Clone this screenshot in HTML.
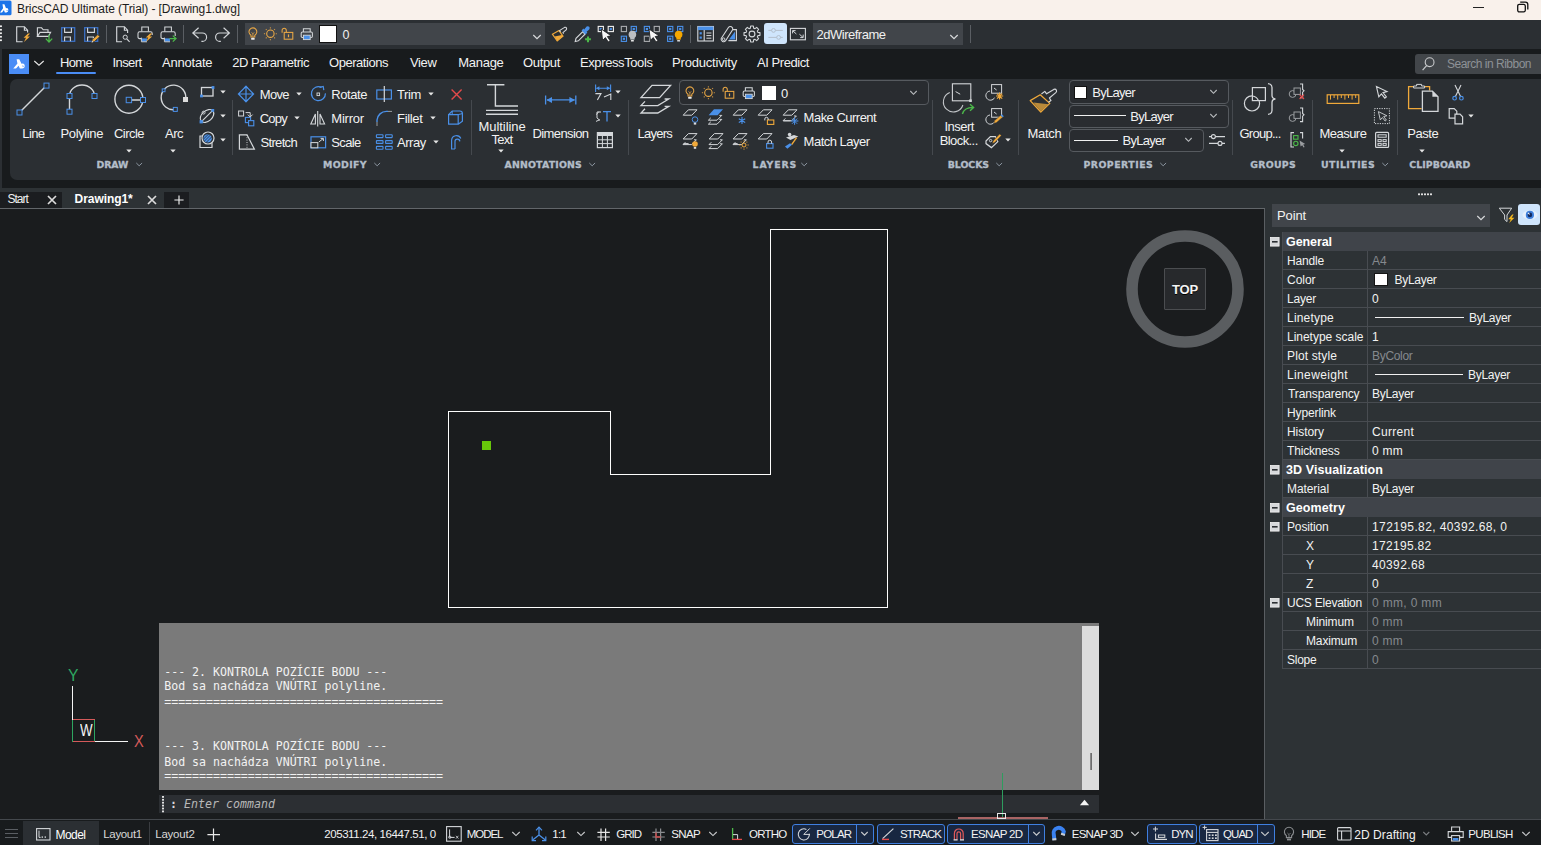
<!DOCTYPE html>
<html lang="en"><head><meta charset="utf-8"><title>BricsCAD Ultimate (Trial) - [Drawing1.dwg]</title>
<style>
html,body{margin:0;padding:0;background:#181b1d;}
body{width:1541px;height:845px;position:relative;overflow:hidden;font-family:"Liberation Sans",sans-serif;}
#app{position:absolute;left:0;top:0;width:1541px;height:845px;overflow:hidden;}
#app>div,#app>svg,#app>span{position:absolute;}
#app>svg{overflow:visible;}
.t{white-space:pre;}
</style></head><body><div id="app">
<div style="left:0px;top:0px;width:1541px;height:20px;background:#f9f1eb;"></div>
<svg style="left:0px;top:0px;" width="13" height="16" viewBox="0 0 13 16"><rect x="-2" y="0.5" width="13.5" height="14.8" rx="1.6" fill="#1c74e9"/><g transform="translate(0.3 -0.6) scale(0.84 1.12)"><path d="M2.6 4.4 h2.3 l1.9 3.5 q2.6 -0.6 2.8 1.6 q0 2.1 -2.3 2.1 h-1.9 l-1.1 -2.1 l-2.2 2.1 h-2.4 l3.6 -3.8 z M7.4 9.4 l0.6 1.1 q0.7 0 0.7 -0.6 q0 -0.6 -1.3 -0.5 z" fill="#fff" fill-rule="evenodd"/></g></svg>
<span class="t" style="left:17px;top:1px;line-height:17px;font-size:12px;color:#1c1c1c;letter-spacing:-0.094px;">BricsCAD Ultimate (Trial) - [Drawing1.dwg]</span>
<div style="left:1473px;top:7px;width:11px;height:1px;background:#222;"></div>
<svg style="left:1517px;top:1px;" width="12" height="12" viewBox="0 0 12 12"><rect x="0.7" y="3.3" width="7.6" height="7.6" rx="1.6" fill="none" stroke="#111" stroke-width="1.3"/><path d="M3.2 1.2 h5.2 a2.4 2.4 0 0 1 2.4 2.4 v5" fill="none" stroke="#111" stroke-width="1.3"/></svg>
<div style="left:0px;top:20px;width:1541px;height:29px;background:#2b2f33;"></div>
<svg style="left:0px;top:25px;" width="3" height="19" viewBox="0 0 3 19"><rect x="0" y="0.4" width="1.9" height="1.7" fill="#f0f0f0"/><rect x="0" y="3.9" width="1.9" height="1.7" fill="#f0f0f0"/><rect x="0" y="7.4" width="1.9" height="1.7" fill="#f0f0f0"/><rect x="0" y="10.9" width="1.9" height="1.7" fill="#f0f0f0"/><rect x="0" y="14.4" width="1.9" height="1.7" fill="#f0f0f0"/></svg>
<svg style="left:16px;top:26px;" width="16" height="18" viewBox="0 0 16 18"><path d="M11.6 6.4 V4.2 L8.4 0.7 H0.7 V15.7 H6.6 M8.4 0.7 V4.2 H11.6" fill="none" stroke="#d4d7da" stroke-width="1.15"/><path d="M12.0 7.6 l-4.4 4.2 h2.4 l-2 4.2 l6 -5.4 h-2.6 l2.6 -3 z" fill="#f0a93a"/></svg>
<svg style="left:36px;top:26px;" width="18" height="18" viewBox="0 0 18 18"><path d="M1.4 10.4 V1.8 H5.6 L7.2 3.8 H12 V6.4 M1.4 10.4 L4 6.4 H14.6 L12.4 10.4 Z" fill="none" stroke="#d4d7da" stroke-width="1.1"/><path d="M13 8.6 V15.6 M9.8 12.6 L13 16 L16.2 12.6" fill="none" stroke="#4cb84a" stroke-width="1.3"/></svg>
<svg style="left:61px;top:27px;" width="15" height="15" viewBox="0 0 15 15"><rect x="0.7" y="0.7" width="13" height="13.6" fill="none" stroke="#3b70c4" stroke-width="1.3"/><path d="M3.6 0.8 V5.4 H10.4 V0.8 M3.6 14.2 V10 H9.4 V14.2" fill="none" stroke="#d4d7da" stroke-width="1.1"/></svg>
<svg style="left:84px;top:27px;" width="16" height="16" viewBox="0 0 16 16"><rect x="0.7" y="0.7" width="13" height="13.6" fill="none" stroke="#3b70c4" stroke-width="1.3"/><path d="M3.6 0.8 V5.4 H10.4 V0.8 M3.6 14.2 V10 H9.4 V14.2" fill="none" stroke="#d4d7da" stroke-width="1.1"/><path d="M7.6 15.4 l0.8 -2.8 l5.4 -5 l2 2 l-5.4 5 z" fill="#f0a93a" stroke="#2b2f33" stroke-width="0.7"/><path d="M7.6 15.4 l0.5 -1.8 l1.3 1.3 z" fill="#ddd"/></svg>
<div style="left:106px;top:25px;width:1px;height:18px;background:#5a5e63;"></div>
<svg style="left:116px;top:26px;" width="15" height="18" viewBox="0 0 15 18"><path d="M11.6 7 V4.2 L8.4 0.7 H0.7 V15.7 H6 M8.4 0.7 V4.2 H11.6" fill="none" stroke="#d4d7da" stroke-width="1.15"/><circle cx="9.2" cy="11.2" r="2.1" fill="none" stroke="#d4d7da" stroke-width="1"/><path d="M10.8 12.8 l2.8 3" stroke="#d4d7da" stroke-width="1.1"/></svg>
<svg style="left:137px;top:26px;" width="18" height="18" viewBox="0 0 18 18"><path d="M4.8 5.6 V1 H11.4 V5.6" fill="none" stroke="#d4d7da" stroke-width="1.05"/><path d="M4.6 12.6 H2.6 Q1 12.6 1 11 V7.4 Q1 5.8 2.6 5.8 H13.6 Q15.2 5.8 15.2 7.4 V9" fill="none" stroke="#d4d7da" stroke-width="1.05"/><rect x="4.6" y="12.4" width="5.4" height="3.2" fill="#4a90e8"/><path d="M4.4 11.6 V15.8 H10" fill="none" stroke="#d4d7da" stroke-width="0.9"/><path d="M13.2 7.4 l-4.4 4.2 h2.4 l-2 4.2 l6 -5.4 h-2.6 l2.6 -3 z" fill="#f0a93a"/></svg>
<svg style="left:160px;top:26px;" width="18" height="18" viewBox="0 0 18 18"><path d="M4.8 5.6 V1 H11.4 V5.6" fill="none" stroke="#d4d7da" stroke-width="1.05"/><path d="M4.6 12.6 H2.6 Q1 12.6 1 11 V7.4 Q1 5.8 2.6 5.8 H13.6 Q15.2 5.8 15.2 7.4 V9" fill="none" stroke="#d4d7da" stroke-width="1.05"/><rect x="4.6" y="12.4" width="5.4" height="3.2" fill="#4a90e8"/><path d="M4.4 11.6 V15.8 H10" fill="none" stroke="#d4d7da" stroke-width="0.9"/><path d="M15.2 9 V10" stroke="#d4d7da" stroke-width="1.05"/><path d="M9.4 12.6 h6.4 M12.8 9.6 l3.2 3 l-3.2 3" fill="none" stroke="#4cb84a" stroke-width="1.3"/></svg>
<div style="left:183px;top:25px;width:1px;height:18px;background:#5a5e63;"></div>
<svg style="left:191.5px;top:26.5px;" width="17" height="16" viewBox="0 0 17 16"><path d="M6.6 0.8 L0.8 6 L6.6 11.2 M0.8 6 H10.4 A4.2 4.2 0 0 1 10.4 14.4 H9.4" fill="none" stroke="#d4d7da" stroke-width="1.15"/></svg>
<svg style="left:214px;top:26.5px;" width="17" height="16" viewBox="0 0 17 16"><path d="M9.6 0.8 L15.4 6 L9.6 11.2 M15.4 6 H5.8 A4.2 4.2 0 0 0 5.8 14.4 H6.8" fill="none" stroke="#d4d7da" stroke-width="1.15"/></svg>
<div style="left:237px;top:25px;width:1px;height:18px;background:#5a5e63;"></div>
<div style="left:245px;top:23px;width:300px;height:22px;background:#41454a;"></div>
<svg style="left:248px;top:27px;" width="11" height="14" viewBox="0 0 11 14"><path d="M3 8.2 A3.9 3.9 0 1 1 6.8 8.2 V10 H3 Z" fill="none" stroke="#eaa845" stroke-width="1.05"/><path d="M3.6 5.4 L4.9 6.8 L6.2 5.4 M4.9 6.8 V9.6" fill="none" stroke="#eaa845" stroke-width="0.8"/><rect x="3.1" y="10.8" width="3.6" height="2" rx="0.9" fill="#ececec"/></svg>
<svg style="left:263.2px;top:27px;" width="15" height="15" viewBox="0 0 15 15"><g transform="translate(7.4 6.7)"><circle r="3.7" fill="none" stroke="#eaa845" stroke-width="1.1"/><path d="M0 -5.3 V-6.5" stroke="#eaa845" stroke-width="1.1" stroke-opacity="0.8" transform="rotate(0)"/><path d="M0 -5.3 V-6.5" stroke="#eaa845" stroke-width="1.1" stroke-opacity="0.8" transform="rotate(45)"/><path d="M0 -5.3 V-6.5" stroke="#eaa845" stroke-width="1.1" stroke-opacity="0.8" transform="rotate(90)"/><path d="M0 -5.3 V-6.5" stroke="#eaa845" stroke-width="1.1" stroke-opacity="0.8" transform="rotate(135)"/><path d="M0 -5.3 V-6.5" stroke="#eaa845" stroke-width="1.1" stroke-opacity="0.8" transform="rotate(180)"/><path d="M0 -5.3 V-6.5" stroke="#eaa845" stroke-width="1.1" stroke-opacity="0.8" transform="rotate(225)"/><path d="M0 -5.3 V-6.5" stroke="#eaa845" stroke-width="1.1" stroke-opacity="0.8" transform="rotate(270)"/><path d="M0 -5.3 V-6.5" stroke="#eaa845" stroke-width="1.1" stroke-opacity="0.8" transform="rotate(315)"/></g></svg>
<svg style="left:281.2px;top:27px;" width="13" height="14" viewBox="0 0 13 14"><rect x="3.2" y="5.4" width="8.6" height="6.8" fill="none" stroke="#eaa845" stroke-width="1.05"/><path d="M1.1 5.8 V3.4 A2.1 2.1 0 0 1 5.3 3.4 V5.2" fill="none" stroke="#eaa845" stroke-width="1.05"/><rect x="6.9" y="7.4" width="1.2" height="2.8" fill="#eaa845"/></svg>
<svg style="left:300.2px;top:27px;" width="14" height="14" viewBox="0 0 14 14"><path d="M3.4 5 V1.8 H10.2 V5 M3.2 10.4 H2.4 Q1.2 10.4 1.2 9.2 V6.2 Q1.2 5 2.4 5 H11.2 Q12.4 5 12.4 6.2 V9.2 Q12.4 10.4 11.2 10.4 H10.4" fill="none" stroke="#d4d7da" stroke-width="1.05"/><rect x="3.4" y="8.2" width="6.8" height="4.4" fill="#4a90e8" stroke="#d4d7da" stroke-width="0.9"/></svg>
<div style="left:319px;top:25px;width:18px;height:18px;background:#fff;border:1px solid #111;box-sizing:border-box;"></div>
<span class="t" style="left:342.5px;top:26px;line-height:18px;font-size:12.5px;color:#f0f0f0;letter-spacing:0.047px;">0</span>
<svg style="left:533px;top:33.5px;" width="8" height="6" viewBox="0 0 8 6"><path d="M0.3 1 L4.0 4.6 L7.7 1" fill="none" stroke="#d8dadc" stroke-width="1.2"/></svg>
<svg style="left:551px;top:26px;" width="18" height="17" viewBox="0 0 18 17"><path d="M1.4 8.2 L8 4.6 L12 10.2 L6.2 15 Z" fill="none" stroke="#f0a93a" stroke-width="1.15"/><path d="M3.6 10.6 L11 9 L12 10.2 L6.2 15 Z" fill="#f0a93a"/><path d="M9.4 6 L8.6 4.6 L10.4 3.4 L13.6 1.4 Q15.2 1 15.6 2.4 Q15.8 3.4 14.8 4.2 L12 6.6 L12.6 7.6" fill="none" stroke="#d4d7da" stroke-width="1.1"/></svg>
<svg style="left:574px;top:25px;" width="18" height="18" viewBox="0 0 18 18"><path d="M1.2 16.6 L2 13.4 L8.6 6.8 L11 9.2 L4.4 15.8 Z" fill="none" stroke="#d4d7da" stroke-width="1.1"/><path d="M7.6 5.4 L9.4 3.6 L10.2 4.4 L12.6 1.6 Q14 0.6 15.2 1.8 Q16.2 3 15.2 4.4 L12.6 6.8 L13.4 7.6 L11.6 9.4 Z" fill="#4a90e8"/><path d="M14 11.4 V17.2 M11.1 14.3 H16.9" stroke="#4cb84a" stroke-width="2"/></svg>
<svg style="left:597px;top:25px;" width="18" height="18" viewBox="0 0 18 18"><rect x="1.2" y="1.4" width="5.2" height="5.2" fill="none" stroke="#f0f0f0" stroke-width="1.1"/><rect x="2.7" y="2.9" width="2.2" height="2.2" fill="#4a90e8"/><rect x="11.2" y="1.4" width="5.2" height="5.2" fill="none" stroke="#f0f0f0" stroke-width="1.1"/><rect x="12.7" y="2.9" width="2.2" height="2.2" fill="#4a90e8"/><path d="M4.2 4 l1.4 11.4 l2.8 -2.8 l2.8 4.4 l2 -1.2 l-2.8 -4.2 l3.8 -0.8 z" fill="#f6f6f6" stroke="#1e2023" stroke-width="0.9" stroke-linejoin="round"/></svg>
<svg style="left:620px;top:25px;" width="18" height="18" viewBox="0 0 18 18"><rect x="1.3" y="1.4" width="5.2" height="5.2" fill="none" stroke="#a9acaf" stroke-width="1.1"/><rect x="11.2" y="1.4" width="5.2" height="5.2" fill="none" stroke="#4a90e8" stroke-width="1.1"/><rect x="12.7" y="2.9" width="2.2" height="2.2" fill="#4a90e8"/><rect x="1.3" y="11.2" width="5.2" height="5.2" fill="none" stroke="#4a90e8" stroke-width="1.1"/><rect x="2.8" y="12.7" width="2.2" height="2.2" fill="#4a90e8"/><circle cx="12.4" cy="9.6" r="3.8" fill="#bdbfc1"/><path d="M10.2 12.0 h4.4 v2.6 h-4.4 z" fill="#bdbfc1"/><rect x="10.9" y="15.0" width="3" height="1.6" rx="0.6" fill="#e8e8e8"/></svg>
<svg style="left:643px;top:25px;" width="18" height="18" viewBox="0 0 18 18"><rect x="1.3" y="1.4" width="5.2" height="5.2" fill="none" stroke="#4a90e8" stroke-width="1.1"/><rect x="2.8" y="2.9" width="2.2" height="2.2" fill="#4a90e8"/><rect x="11.2" y="1.4" width="5.2" height="5.2" fill="none" stroke="#a9acaf" stroke-width="1.1"/><rect x="1.3" y="11.2" width="5.2" height="5.2" fill="none" stroke="#a9acaf" stroke-width="1.1"/><path d="M6 4 l1.4 11.4 l2.8 -2.8 l2.8 4.4 l2 -1.2 l-2.8 -4.2 l3.8 -0.8 z" fill="#f6f6f6" stroke="#1e2023" stroke-width="0.9" stroke-linejoin="round"/></svg>
<svg style="left:666px;top:25px;" width="18" height="18" viewBox="0 0 18 18"><rect x="1.6" y="1.4" width="5.2" height="5.2" fill="none" stroke="#4a90e8" stroke-width="1.1"/><rect x="3.1" y="2.9" width="2.2" height="2.2" fill="#4a90e8"/><rect x="11.6" y="1.4" width="5.2" height="5.2" fill="none" stroke="#4a90e8" stroke-width="1.1"/><rect x="13.1" y="2.9" width="2.2" height="2.2" fill="#4a90e8"/><rect x="1.6" y="11.2" width="5.2" height="5.2" fill="none" stroke="#4a90e8" stroke-width="1.1"/><rect x="3.1" y="12.7" width="2.2" height="2.2" fill="#4a90e8"/><circle cx="12.6" cy="9.6" r="3.8" fill="#f5a700"/><path d="M10.399999999999999 12.0 h4.4 v2.6 h-4.4 z" fill="#f5a700"/><rect x="11.1" y="15.0" width="3" height="1.6" rx="0.6" fill="#d8d8d8"/></svg>
<div style="left:690px;top:25px;width:1px;height:18px;background:#5a5e63;"></div>
<svg style="left:697px;top:25px;" width="18" height="18" viewBox="0 0 18 18"><rect x="0.8" y="1.5" width="15.6" height="14.5" fill="none" stroke="#d4d7da" stroke-width="1.1"/><rect x="0.8" y="1.5" width="15.6" height="3.6" fill="#4a90e8"/><path d="M7.2 5 v11" stroke="#d4d7da" stroke-width="1.1"/><rect x="2.6" y="7.2" width="2.2" height="2.2" fill="#4a90e8"/><rect x="2.6" y="11.5" width="2.2" height="2.2" fill="#4a90e8"/><path d="M9.4 8 h5 M9.4 10.6 h5 M9.4 13.2 h5" stroke="#d4d7da" stroke-width="1"/></svg>
<svg style="left:720px;top:25px;" width="18" height="18" viewBox="0 0 18 18"><path d="M1.2 13.5 l7.2 -11 a2.4 2.4 0 0 1 4.2 2.2 l-7 11 a2.5 2.5 0 0 1 -4.4 -2.2 z" fill="none" stroke="#d4d7da" stroke-width="1.1"/><circle cx="3.6" cy="14.2" r="1.3" fill="none" stroke="#d4d7da" stroke-width="1"/><path d="M8.4 15.6 h8 v-11 h-3.5" fill="none" stroke="#d4d7da" stroke-width="1.1"/><path d="M9 14.4 l6 -8 v8 z" fill="#4a90e8"/></svg>
<svg style="left:743px;top:25px;" width="18" height="18" viewBox="0 0 18 18"><g transform="translate(9 9)"><path d="M-1.63 -5.88 L-1.37 -7.98 L1.37 -7.98 L1.63 -5.88 L3.01 -5.31 L4.68 -6.61 L6.61 -4.68 L5.31 -3.01 L5.88 -1.63 L7.98 -1.37 L7.98 1.37 L5.88 1.63 L5.31 3.01 L6.61 4.68 L4.68 6.61 L3.01 5.31 L1.63 5.88 L1.37 7.98 L-1.37 7.98 L-1.63 5.88 L-3.01 5.31 L-4.68 6.61 L-6.61 4.68 L-5.31 3.01 L-5.88 1.63 L-7.98 1.37 L-7.98 -1.37 L-5.88 -1.63 L-5.31 -3.01 L-6.61 -4.68 L-4.68 -6.61 L-3.01 -5.31 Z" fill="none" stroke="#d4d7da" stroke-width="1.1" stroke-linejoin="round"/><circle r="2.9" fill="none" stroke="#d4d7da" stroke-width="1.1"/></g></svg>
<div style="left:764px;top:23px;width:23px;height:21px;background:#cfe5fc;border-radius:3px;"></div>
<svg style="left:766px;top:25px;" width="19" height="18" viewBox="0 0 19 18"><path d="M2.4 5.4 h14.4 M2.4 12.4 h14.4" stroke="#b4bfcc" stroke-width="1"/><circle cx="7.5" cy="5.4" r="1.9" fill="#cfe5fc" stroke="#b4bfcc" stroke-width="1"/><circle cx="12.6" cy="12.4" r="1.9" fill="#cfe5fc" stroke="#b4bfcc" stroke-width="1"/></svg>
<svg style="left:789px;top:26px;" width="18" height="16" viewBox="0 0 18 16"><rect x="1.4" y="2.4" width="15" height="11.4" fill="none" stroke="#d4d7da" stroke-width="1.1"/><path d="M3.6 7.4 V4.6 H6.6 M3.8 4.8 L7.4 8 M14.2 8.6 V11.6 H11.2 M14 11.4 L10.4 8.2" fill="none" stroke="#d4d7da" stroke-width="1"/></svg>
<div style="left:813px;top:23px;width:150px;height:22px;background:#41454a;"></div>
<span class="t" style="left:816.5px;top:26px;line-height:18px;font-size:13px;color:#f0f0f0;letter-spacing:-0.493px;">2dWireframe</span>
<svg style="left:950px;top:33.5px;" width="8" height="6" viewBox="0 0 8 6"><path d="M0.3 1 L4.0 4.6 L7.7 1" fill="none" stroke="#d8dadc" stroke-width="1.2"/></svg>
<div style="left:970px;top:25px;width:1px;height:18px;background:#5a5e63;"></div>
<div style="left:0px;top:49px;width:1541px;height:138px;background:#181b1d;"></div>
<div style="left:0px;top:49px;width:2px;height:139px;background:#2b2f33;"></div>
<div style="left:9px;top:54px;width:20px;height:20px;background:#4a8df6;"></div>
<svg style="left:9px;top:54px;" width="20" height="20" viewBox="0 0 20 20"><g transform="translate(4.6 -0.45) scale(1.16 1.28)"><path d="M2.6 4.4 h2.3 l1.9 3.5 q2.6 -0.6 2.8 1.6 q0 2.1 -2.3 2.1 h-1.9 l-1.1 -2.1 l-2.2 2.1 h-2.4 l3.6 -3.8 z M7.4 9.4 l0.6 1.1 q0.7 0 0.7 -0.6 q0 -0.6 -1.3 -0.5 z" fill="#fff" fill-rule="evenodd"/></g></svg>
<svg style="left:34px;top:60.4px;" width="10" height="6.6" viewBox="0 0 10 6.6"><path d="M0.3 1 L5.0 5.199999999999999 L9.7 1" fill="none" stroke="#e8e8e8" stroke-width="1.1"/></svg>
<span class="t" style="left:60px;top:54px;line-height:18px;font-size:13px;color:#f2f2f2;letter-spacing:-0.672px;">Home</span>
<span class="t" style="left:112.4px;top:54px;line-height:18px;font-size:13px;color:#f2f2f2;letter-spacing:-0.536px;">Insert</span>
<span class="t" style="left:162px;top:54px;line-height:18px;font-size:13px;color:#f2f2f2;letter-spacing:-0.218px;">Annotate</span>
<span class="t" style="left:232.2px;top:54px;line-height:18px;font-size:13px;color:#f2f2f2;letter-spacing:-0.483px;">2D Parametric</span>
<span class="t" style="left:329px;top:54px;line-height:18px;font-size:13px;color:#f2f2f2;letter-spacing:-0.459px;">Operations</span>
<span class="t" style="left:410px;top:54px;line-height:18px;font-size:13px;color:#f2f2f2;letter-spacing:-0.388px;">View</span>
<span class="t" style="left:458.3px;top:54px;line-height:18px;font-size:13px;color:#f2f2f2;letter-spacing:-0.297px;">Manage</span>
<span class="t" style="left:523px;top:54px;line-height:18px;font-size:13px;color:#f2f2f2;letter-spacing:-0.339px;">Output</span>
<span class="t" style="left:580px;top:54px;line-height:18px;font-size:13px;color:#f2f2f2;letter-spacing:-0.401px;">ExpressTools</span>
<span class="t" style="left:672px;top:54px;line-height:18px;font-size:13px;color:#f2f2f2;letter-spacing:-0.184px;">Productivity</span>
<span class="t" style="left:757px;top:54px;line-height:18px;font-size:13px;color:#f2f2f2;letter-spacing:-0.436px;">AI Predict</span>
<div style="left:56px;top:72px;width:40px;height:2px;background:#4a8df6;border-radius:1px;"></div>
<div style="left:1415px;top:54px;width:130px;height:20px;background:#42464a;border-radius:3px;"></div>
<svg style="left:1421px;top:56px;" width="15" height="16" viewBox="0 0 15 16"><circle cx="8.6" cy="6.2" r="4.4" fill="none" stroke="#c8cacc" stroke-width="1.1"/><path d="M5.6 9.6 l-4 4.6" stroke="#c8cacc" stroke-width="1.2"/></svg>
<span class="t" style="left:1447px;top:56px;line-height:17px;font-size:12px;color:#8e9297;letter-spacing:-0.504px;">Search in Ribbon</span>
<div style="left:10px;top:79px;width:1540px;height:101px;background:#2b2f33;border-radius:7px 0 0 7px;"></div>
<svg style="left:0px;top:79px;" width="232" height="101" viewBox="0 79 232 101"><path d="M19.5 112.5 L46.5 85.6" stroke="#d4d7da" stroke-width="1.4"/><rect x="17.0" y="110.0" width="5" height="5" fill="#2b2f33" stroke="#4a90e8" stroke-width="1"/><rect x="44.0" y="83.1" width="5" height="5" fill="#2b2f33" stroke="#4a90e8" stroke-width="1"/><path d="M69.5 111.7 V96 A12.5 11 0 0 1 94.5 96" fill="none" stroke="#d4d7da" stroke-width="1.4"/><rect x="67.0" y="93.5" width="5" height="5" fill="#2b2f33" stroke="#4a90e8" stroke-width="1"/><rect x="92.0" y="93.5" width="5" height="5" fill="#2b2f33" stroke="#4a90e8" stroke-width="1"/><rect x="67.0" y="109.2" width="5" height="5" fill="#2b2f33" stroke="#4a90e8" stroke-width="1"/><circle cx="128.9" cy="99.2" r="14" fill="none" stroke="#d4d7da" stroke-width="1.4"/><path d="M129 100 H143" stroke="#b8bbbe" stroke-width="1.8"/><rect x="126.2" y="97.3" width="5.4" height="5.4" fill="#2b2f33" stroke="#4a90e8" stroke-width="1"/><rect x="140.5" y="97.5" width="5" height="5" fill="#2b2f33" stroke="#4a90e8" stroke-width="1"/><path d="M185.6 99.5 A12.3 12.3 0 1 0 175.3 109.6" fill="none" stroke="#d4d7da" stroke-width="1.4"/><rect x="162.2" y="88.89999999999999" width="2.8" height="2.8" fill="#2b2f33" stroke="#4a90e8" stroke-width="1"/><rect x="183" y="97" width="5" height="5" fill="#dcdcdc"/><rect x="173.3" y="107.4" width="4" height="4" fill="#2b2f33" stroke="#4a90e8" stroke-width="1"/><rect x="201.5" y="87.5" width="11.5" height="8.5" fill="none" stroke="#d4d7da" stroke-width="1.3"/><rect x="200.6" y="95.1" width="1.8" height="1.8" fill="#4a90e8" stroke="#4a90e8" stroke-width="1"/><rect x="212.1" y="86.6" width="1.8" height="1.8" fill="#4a90e8" stroke="#4a90e8" stroke-width="1"/><ellipse cx="207" cy="116" rx="7.8" ry="5.2" transform="rotate(-42 207 116)" fill="none" stroke="#d4d7da" stroke-width="1.2"/><path d="M201.2 121.8 L212.8 110.4" stroke="#d4d7da" stroke-width="1.1"/><rect x="200.1" y="120.7" width="2.2" height="2.2" fill="#4a90e8" stroke="#4a90e8" stroke-width="1"/><rect x="211.9" y="109.5" width="1.8" height="1.8" fill="#4a90e8" stroke="#4a90e8" stroke-width="1"/><circle cx="203.6" cy="112.6" r="1.5" fill="none" stroke="#d4d7da" stroke-width="0.9"/><path d="M206 136 h-6 v11.5 h12 v-5" fill="none" stroke="#d4d7da" stroke-width="1.2"/><circle cx="208" cy="138" r="6" fill="#2b2f33" stroke="#d4d7da" stroke-width="1.2"/><circle cx="207.6" cy="138.4" r="4.2" fill="#4a90e8"/><path d="M204.5 141 l6 -6 M206 142.6 l6 -6 M203.6 139 l5 -5" stroke="#2b2f33" stroke-width="0.8"/></svg>
<span class="t" style="left:22.3px;top:125px;line-height:18px;font-size:13px;color:#f2f2f2;letter-spacing:-0.645px;">Line</span>
<span class="t" style="left:60.6px;top:125px;line-height:18px;font-size:13px;color:#f2f2f2;letter-spacing:-0.391px;">Polyline</span>
<span class="t" style="left:114px;top:125px;line-height:18px;font-size:13px;color:#f2f2f2;letter-spacing:-0.539px;">Circle</span>
<span class="t" style="left:165px;top:125px;line-height:18px;font-size:13px;color:#f2f2f2;letter-spacing:-0.5px;">Arc</span>
<svg style="left:126px;top:149px;" width="6" height="4" viewBox="0 0 6 4"><path d="M0.3 0.5 H5.7 L3 3.6 Z" fill="#e6e6e6"/></svg>
<svg style="left:170px;top:149px;" width="6" height="4" viewBox="0 0 6 4"><path d="M0.3 0.5 H5.7 L3 3.6 Z" fill="#e6e6e6"/></svg>
<svg style="left:220px;top:90px;" width="6" height="4" viewBox="0 0 6 4"><path d="M0.3 0.5 H5.7 L3 3.6 Z" fill="#e6e6e6"/></svg>
<svg style="left:220px;top:114px;" width="6" height="4" viewBox="0 0 6 4"><path d="M0.3 0.5 H5.7 L3 3.6 Z" fill="#e6e6e6"/></svg>
<svg style="left:220px;top:138px;" width="6" height="4" viewBox="0 0 6 4"><path d="M0.3 0.5 H5.7 L3 3.6 Z" fill="#e6e6e6"/></svg>
<div style="left:232px;top:100px;width:1px;height:55px;background:#45494e;"></div>
<span class="t" style="left:96.5px;top:158px;line-height:13px;font-size:9.4px;color:#b3bdc8;font-weight:700;font-family:'DejaVu Sans','Liberation Sans',sans-serif;letter-spacing:-0.072px;-webkit-text-stroke:0.3px #b3bdc8;">DRAW</span>
<svg style="left:136px;top:162.4px;" width="6.4" height="5.2" viewBox="0 0 6.4 5.2"><path d="M0.3 1 L3.2 3.8000000000000003 L6.1000000000000005 1" fill="none" stroke="#8d97a2" stroke-width="1"/></svg>
<svg style="left:232px;top:79px;" width="240" height="101" viewBox="232 79 240 101"><path d="M246 86.3 L253.6 94 L246 101.7 L238.4 94 Z M238.4 94 H253.6 M246 86.3 V101.7" fill="none" stroke="#4a90e8" stroke-width="1.2"/><path d="M244.2 88.2 L246 86.3 L247.8 88.2 M244.2 99.8 L246 101.7 L247.8 99.8" fill="none" stroke="#4a90e8" stroke-width="1.2"/><path d="M321.5 87.4 A7 7 0 1 0 325.4 93.4" fill="none" stroke="#4a90e8" stroke-width="1.3"/><path d="M319.6 87.3 l3.6 -0.9 l0.6 3.8" fill="none" stroke="#4a90e8" stroke-width="1.2"/><rect x="317" y="93" width="2.6" height="2.6" fill="none" stroke="#d4d7da" stroke-width="0.9"/><rect x="376.8" y="90" width="14.6" height="9" fill="none" stroke="#4a90e8" stroke-width="1.2"/><path d="M384.3 86 V102" stroke="#d4d7da" stroke-width="1.2"/><path d="M451.6 89.4 L461.6 99.4 M461.6 89.4 L451.6 99.4" stroke="#e24a4a" stroke-width="1.4"/><rect x="238.6" y="111" width="5" height="5" fill="none" stroke="#d4d7da" stroke-width="1"/><rect x="245.4" y="117.4" width="5.2" height="5.2" fill="none" stroke="#4a90e8" stroke-width="1.1"/><rect x="248.6" y="120.6" width="5.2" height="5.2" fill="#2b2f33" stroke="#4a90e8" stroke-width="1.1"/><path d="M245.6 112.6 H250.2 V116.6 M247.8 114.6 L250.2 117 L252.6 114.6" fill="none" stroke="#d4d7da" stroke-width="1"/><path d="M315.4 124 h-4.6 l4.6 -10 z" fill="none" stroke="#d4d7da" stroke-width="1.1"/><path d="M320 124 h4.6 l-4.6 -10 z" fill="none" stroke="#d4d7da" stroke-width="1.1"/><path d="M317.7 111 V126.6" stroke="#d4d7da" stroke-width="1.1"/><path d="M377 122 V120 A9.4 9.4 0 0 1 386.4 111.4 H388" fill="none" stroke="#4a90e8" stroke-width="1.4"/><path d="M377 122 V126 M388 111.4 H392" stroke="#9a9da0" stroke-width="1"/><path d="M448.6 114.6 h9.6 v9.6 h-9.6 z M448.6 114.6 l3.6 -3.6 h7.6 q2.6 0 2.6 2.6 v7.6 l-4.2 3" fill="none" stroke="#4a90e8" stroke-width="1.2"/><path d="M452.2 111 v3.6 M462.4 113.6 l-4.2 1" fill="none" stroke="#4a90e8" stroke-width="1"/><path d="M239.4 149.2 V134.8 H247 L254.4 149.2 Z" fill="none" stroke="#d4d7da" stroke-width="1.2"/><path d="M247 134.8 V149.2" stroke="#d4d7da" stroke-width="0.9" stroke-dasharray="1 1.4"/><rect x="311" y="136.8" width="14.6" height="11" fill="none" stroke="#4a90e8" stroke-width="1.2"/><rect x="311" y="142.6" width="6.8" height="5.2" fill="#2b2f33" stroke="#d4d7da" stroke-width="1"/><path d="M318.8 142 l4.4 -3.4 M320.6 138.4 h2.8 v2.6" fill="none" stroke="#d4d7da" stroke-width="1"/><rect x="376.4" y="134.8" width="6.6" height="2.8" rx="0.5" fill="none" stroke="#4a90e8" stroke-width="1.1"/><rect x="385.59999999999997" y="134.8" width="6.6" height="2.8" rx="0.5" fill="none" stroke="#4a90e8" stroke-width="1.1"/><rect x="376.4" y="140.60000000000002" width="6.6" height="2.8" rx="0.5" fill="none" stroke="#4a90e8" stroke-width="1.1"/><rect x="385.59999999999997" y="140.60000000000002" width="6.6" height="2.8" rx="0.5" fill="none" stroke="#4a90e8" stroke-width="1.1"/><rect x="376.4" y="146.4" width="6.6" height="2.8" rx="0.5" fill="none" stroke="#4a90e8" stroke-width="1.1"/><rect x="385.59999999999997" y="146.4" width="6.6" height="2.8" rx="0.5" fill="none" stroke="#4a90e8" stroke-width="1.1"/><path d="M455 149 H451.6 V140.2 A4.8 4.8 0 0 1 460.8 138.6 M455 149 V141.6 A2.4 2.4 0 0 1 459.8 141.4" fill="none" stroke="#4a90e8" stroke-width="1.2"/></svg>
<span class="t" style="left:259.7px;top:86px;line-height:18px;font-size:13px;color:#f2f2f2;letter-spacing:-0.624px;">Move</span>
<svg style="left:296px;top:92px;" width="6" height="4" viewBox="0 0 6 4"><path d="M0.3 0.5 H5.7 L3 3.6 Z" fill="#e6e6e6"/></svg>
<span class="t" style="left:331.3px;top:86px;line-height:18px;font-size:13px;color:#f2f2f2;letter-spacing:-0.435px;">Rotate</span>
<span class="t" style="left:397px;top:86px;line-height:18px;font-size:13px;color:#f2f2f2;letter-spacing:-0.379px;">Trim</span>
<svg style="left:428px;top:92px;" width="6" height="4" viewBox="0 0 6 4"><path d="M0.3 0.5 H5.7 L3 3.6 Z" fill="#e6e6e6"/></svg>
<span class="t" style="left:259.7px;top:110px;line-height:18px;font-size:13px;color:#f2f2f2;letter-spacing:-0.765px;">Copy</span>
<svg style="left:294px;top:116px;" width="6" height="4" viewBox="0 0 6 4"><path d="M0.3 0.5 H5.7 L3 3.6 Z" fill="#e6e6e6"/></svg>
<span class="t" style="left:331.3px;top:110px;line-height:18px;font-size:13px;color:#f2f2f2;letter-spacing:-0.206px;">Mirror</span>
<span class="t" style="left:397px;top:110px;line-height:18px;font-size:13px;color:#f2f2f2;letter-spacing:-0.309px;">Fillet</span>
<svg style="left:430px;top:116px;" width="6" height="4" viewBox="0 0 6 4"><path d="M0.3 0.5 H5.7 L3 3.6 Z" fill="#e6e6e6"/></svg>
<span class="t" style="left:260.5px;top:134px;line-height:18px;font-size:13px;color:#f2f2f2;letter-spacing:-0.67px;">Stretch</span>
<span class="t" style="left:331.3px;top:134px;line-height:18px;font-size:13px;color:#f2f2f2;letter-spacing:-0.666px;">Scale</span>
<span class="t" style="left:397px;top:134px;line-height:18px;font-size:13px;color:#f2f2f2;letter-spacing:-0.452px;">Array</span>
<svg style="left:433px;top:140px;" width="6" height="4" viewBox="0 0 6 4"><path d="M0.3 0.5 H5.7 L3 3.6 Z" fill="#e6e6e6"/></svg>
<div style="left:471px;top:100px;width:1px;height:55px;background:#45494e;"></div>
<span class="t" style="left:323px;top:158px;line-height:13px;font-size:9.4px;color:#b3bdc8;font-weight:700;font-family:'DejaVu Sans','Liberation Sans',sans-serif;letter-spacing:0.372px;-webkit-text-stroke:0.3px #b3bdc8;">MODIFY</span>
<svg style="left:374px;top:162.4px;" width="6.4" height="5.2" viewBox="0 0 6.4 5.2"><path d="M0.3 1 L3.2 3.8000000000000003 L6.1000000000000005 1" fill="none" stroke="#8d97a2" stroke-width="1"/></svg>
<svg style="left:472px;top:79px;" width="160" height="101" viewBox="472 79 160 101"><path d="M487 84.8 H504.4 M495.4 84.8 V106 H518 M486 110.4 H518 M486 114.2 H518" fill="none" stroke="#d4d7da" stroke-width="1.4"/><path d="M545.6 95.4 V104.4 M575.8 95.4 V104.4 M547 99.9 H574.6" stroke="#4a90e8" stroke-width="1.3"/><path d="M546.4 99.9 l5.6 -3 v6 z M575 99.9 l-5.6 -3 v6 z" fill="#4a90e8"/><path d="M595.6 84.6 V92 M610.6 84.6 V92 M596.6 88.2 H609.6" stroke="#4a90e8" stroke-width="1.1"/><path d="M596 88.2 l3.4 -2 v4 z M610.2 88.2 l-3.4 -2 v4 z" fill="#4a90e8"/><path d="M595.4 93.6 H601 L597.4 100 M610.8 100 V94 L604 97" fill="none" stroke="#d4d7da" stroke-width="1.1"/><path d="M603 111.6 H611 M607 111.6 V121.6" stroke="#4a90e8" stroke-width="1.3"/><path d="M597 118 V112 h4 M596.4 114.6 l2.4 -3 M597 118 l3 2.4 M596 121.4 l3.6 -1.6" fill="none" stroke="#d4d7da" stroke-width="1"/><rect x="597.4" y="132.6" width="15" height="15" fill="none" stroke="#d4d7da" stroke-width="1.2"/><rect x="597.4" y="132.6" width="15" height="3.4" fill="#d4d7da"/><path d="M597.4 139.8 h15 M597.4 143.6 h15 M602.4 136 v11.6 M607.4 136 v11.6" stroke="#d4d7da" stroke-width="1"/></svg>
<span class="t" style="left:478.6px;top:118px;line-height:18px;font-size:13px;color:#f2f2f2;letter-spacing:-0.076px;">Multiline</span>
<span class="t" style="left:491.4px;top:131px;line-height:18px;font-size:13px;color:#f2f2f2;letter-spacing:-0.711px;">Text</span>
<svg style="left:498px;top:149px;" width="6" height="4" viewBox="0 0 6 4"><path d="M0.3 0.5 H5.7 L3 3.6 Z" fill="#e6e6e6"/></svg>
<span class="t" style="left:532.5px;top:125px;line-height:18px;font-size:13px;color:#f2f2f2;letter-spacing:-0.602px;">Dimension</span>
<svg style="left:615px;top:90px;" width="6" height="4" viewBox="0 0 6 4"><path d="M0.3 0.5 H5.7 L3 3.6 Z" fill="#e6e6e6"/></svg>
<svg style="left:615px;top:114px;" width="6" height="4" viewBox="0 0 6 4"><path d="M0.3 0.5 H5.7 L3 3.6 Z" fill="#e6e6e6"/></svg>
<div style="left:628px;top:100px;width:1px;height:55px;background:#45494e;"></div>
<span class="t" style="left:504.5px;top:158px;line-height:13px;font-size:9.4px;color:#b3bdc8;font-weight:700;font-family:'DejaVu Sans','Liberation Sans',sans-serif;letter-spacing:0.176px;-webkit-text-stroke:0.3px #b3bdc8;">ANNOTATIONS</span>
<svg style="left:589px;top:162.4px;" width="6.4" height="5.2" viewBox="0 0 6.4 5.2"><path d="M0.3 1 L3.2 3.8000000000000003 L6.1000000000000005 1" fill="none" stroke="#8d97a2" stroke-width="1"/></svg>
<svg style="left:636px;top:79px;" width="40" height="40" viewBox="636 79 40 40"><path d="M652 85.4 H670.6 L659.6 97.6 H641 Z M664.6 99 H668.8 L657.8 105.6 H641 L645 101.4 M664.6 106.4 H668.8 L657.8 113 H641 L645 108.8" fill="none" stroke="#d4d7da" stroke-width="1.3"/></svg>
<span class="t" style="left:637.5px;top:125px;line-height:18px;font-size:13px;color:#f2f2f2;letter-spacing:-0.755px;">Layers</span>
<div style="left:679px;top:80px;width:250px;height:25px;background:#292c30;border:1px solid #565a5f;border-radius:4px;box-sizing:border-box;"></div>
<svg style="left:684.6px;top:85.6px;" width="11" height="14" viewBox="0 0 11 14"><path d="M3 8.2 A3.9 3.9 0 1 1 6.8 8.2 V10 H3 Z" fill="none" stroke="#eaa845" stroke-width="1.05"/><path d="M3.6 5.4 L4.9 6.8 L6.2 5.4 M4.9 6.8 V9.6" fill="none" stroke="#eaa845" stroke-width="0.8"/><rect x="3.1" y="10.8" width="3.6" height="2" rx="0.9" fill="#ececec"/></svg>
<svg style="left:700.6px;top:85.6px;" width="15" height="15" viewBox="0 0 15 15"><g transform="translate(7.4 6.7)"><circle r="3.7" fill="none" stroke="#eaa845" stroke-width="1.1"/><path d="M0 -5.3 V-6.5" stroke="#eaa845" stroke-width="1.1" stroke-opacity="0.8" transform="rotate(0)"/><path d="M0 -5.3 V-6.5" stroke="#eaa845" stroke-width="1.1" stroke-opacity="0.8" transform="rotate(45)"/><path d="M0 -5.3 V-6.5" stroke="#eaa845" stroke-width="1.1" stroke-opacity="0.8" transform="rotate(90)"/><path d="M0 -5.3 V-6.5" stroke="#eaa845" stroke-width="1.1" stroke-opacity="0.8" transform="rotate(135)"/><path d="M0 -5.3 V-6.5" stroke="#eaa845" stroke-width="1.1" stroke-opacity="0.8" transform="rotate(180)"/><path d="M0 -5.3 V-6.5" stroke="#eaa845" stroke-width="1.1" stroke-opacity="0.8" transform="rotate(225)"/><path d="M0 -5.3 V-6.5" stroke="#eaa845" stroke-width="1.1" stroke-opacity="0.8" transform="rotate(270)"/><path d="M0 -5.3 V-6.5" stroke="#eaa845" stroke-width="1.1" stroke-opacity="0.8" transform="rotate(315)"/></g></svg>
<svg style="left:721.6px;top:85.6px;" width="13" height="14" viewBox="0 0 13 14"><rect x="3.2" y="5.4" width="8.6" height="6.8" fill="none" stroke="#eaa845" stroke-width="1.05"/><path d="M1.1 5.8 V3.4 A2.1 2.1 0 0 1 5.3 3.4 V5.2" fill="none" stroke="#eaa845" stroke-width="1.05"/><rect x="6.9" y="7.4" width="1.2" height="2.8" fill="#eaa845"/></svg>
<svg style="left:742.0px;top:85.6px;" width="14" height="14" viewBox="0 0 14 14"><path d="M3.4 5 V1.8 H10.2 V5 M3.2 10.4 H2.4 Q1.2 10.4 1.2 9.2 V6.2 Q1.2 5 2.4 5 H11.2 Q12.4 5 12.4 6.2 V9.2 Q12.4 10.4 11.2 10.4 H10.4" fill="none" stroke="#d4d7da" stroke-width="1.05"/><rect x="3.4" y="8.2" width="6.8" height="4.4" fill="#4a90e8" stroke="#d4d7da" stroke-width="0.9"/></svg>
<div style="left:762px;top:86px;width:14px;height:14px;background:#fff;"></div>
<span class="t" style="left:781px;top:85px;line-height:18px;font-size:13px;color:#f2f2f2;letter-spacing:-0.234px;">0</span>
<svg style="left:909.5px;top:90px;" width="7" height="5.7" viewBox="0 0 7 5.7"><path d="M0.3 1 L3.5 4.3 L6.7 1" fill="none" stroke="#b8bbbe" stroke-width="1.1"/></svg>
<svg style="left:680px;top:106px;" width="122" height="46" viewBox="680 106 122 46"><path d="M688.4 109.8 h8.6 l-5.2 5.4 h-8.6 z" fill="none" stroke="#d4d7da" stroke-width="1"/><circle cx="695" cy="119.6" r="2.8" fill="none" stroke="#4a90e8" stroke-width="1"/><rect x="693.8" y="122.6" width="2.4" height="2" fill="#ddd"/><path d="M714 109.2 h9 l-5.4 6 h-9 z" fill="#4a90e8"/><path d="M719.4 115.39999999999999 h2.4 l-4.8 4.8 h-8.6 l2.4 -2.4" fill="none" stroke="#d4d7da" stroke-width="1"/><path d="M719.4 119.39999999999999 h2.4 l-4.8 4.8 h-8.6 l2.4 -2.4" fill="none" stroke="#d4d7da" stroke-width="1"/><path d="M738.4 109.8 h8.6 l-5.2 5.4 h-8.6 z" fill="none" stroke="#d4d7da" stroke-width="1"/><path d="M742 117 v7 M738.8 118.8 l6.4 3.6 M745.2 118.8 l-6.4 3.6" stroke="#4a90e8" stroke-width="1.1"/><path d="M763.4 109.8 h8.6 l-5.2 5.4 h-8.6 z" fill="none" stroke="#d4d7da" stroke-width="1"/><rect x="767.4" y="120" width="6.4" height="4.4" fill="none" stroke="#f0a93a" stroke-width="1.1"/><path d="M764.8 120.4 v-1.4 a1.7 1.7 0 0 1 3.4 0 v1" fill="none" stroke="#d4d7da" stroke-width="1"/><path d="M788.4 109.8 h8.6 l-5.2 5.4 h-8.6 z" fill="none" stroke="#d4d7da" stroke-width="1"/><path d="M794 115.99999999999999 h2.4 l-4.8 4.8 h-8.6 l2.4 -2.4" fill="none" stroke="#d4d7da" stroke-width="1"/><path d="M783.6 120.8 h7" stroke="#d4d7da" stroke-width="1"/><path d="M794.6 117.4 v7.4 M791 121 h7.4 M792 118.6 l5.2 5.2 M797.2 118.6 l-5.2 5.2" stroke="#4a90e8" stroke-width="1"/><path d="M688.4 133.6 h8.6 l-5.2 5.4 h-8.6 z" fill="none" stroke="#d4d7da" stroke-width="1"/><path d="M694 139.79999999999998 h2.4 l-4.8 4.8 h-8.6 l2.4 -2.4" fill="none" stroke="#d4d7da" stroke-width="1"/><path d="M683.6 143.6 h5" stroke="#d4d7da" stroke-width="1"/><circle cx="695" cy="144" r="2.8" fill="#f0a93a"/><rect x="693.8" y="147" width="2.4" height="1.8" fill="#ddd"/><path d="M714.4 133.6 h8.6 l-5.2 5.4 h-8.6 z" fill="none" stroke="#d4d7da" stroke-width="1"/><path d="M720 139.79999999999998 h2.4 l-4.8 4.8 h-8.6 l2.4 -2.4" fill="none" stroke="#d4d7da" stroke-width="1"/><path d="M720 143.79999999999998 h2.4 l-4.8 4.8 h-8.6 l2.4 -2.4" fill="none" stroke="#d4d7da" stroke-width="1"/><path d="M738.4 133.6 h8.6 l-5.2 5.4 h-8.6 z" fill="none" stroke="#d4d7da" stroke-width="1"/><path d="M744 139.79999999999998 h2.4 l-4.8 4.8 h-8.6 l2.4 -2.4" fill="none" stroke="#d4d7da" stroke-width="1"/><path d="M733.6 143.6 h4" stroke="#d4d7da" stroke-width="1"/><circle cx="744" cy="145" r="2" fill="none" stroke="#f0a93a" stroke-width="1"/><path d="M744 141.4 v-1" stroke="#f0a93a" stroke-width="1" transform="rotate(0 744 145)"/><path d="M744 141.4 v-1" stroke="#f0a93a" stroke-width="1" transform="rotate(45 744 145)"/><path d="M744 141.4 v-1" stroke="#f0a93a" stroke-width="1" transform="rotate(90 744 145)"/><path d="M744 141.4 v-1" stroke="#f0a93a" stroke-width="1" transform="rotate(135 744 145)"/><path d="M744 141.4 v-1" stroke="#f0a93a" stroke-width="1" transform="rotate(180 744 145)"/><path d="M744 141.4 v-1" stroke="#f0a93a" stroke-width="1" transform="rotate(225 744 145)"/><path d="M744 141.4 v-1" stroke="#f0a93a" stroke-width="1" transform="rotate(270 744 145)"/><path d="M744 141.4 v-1" stroke="#f0a93a" stroke-width="1" transform="rotate(315 744 145)"/><path d="M763.4 133.6 h8.6 l-5.2 5.4 h-8.6 z" fill="none" stroke="#d4d7da" stroke-width="1"/><rect x="766.6" y="143.6" width="6.4" height="4.6" fill="none" stroke="#4a90e8" stroke-width="1.1"/><path d="M768 143.6 v-1.6 a1.8 1.8 0 0 1 3.6 0 v1.6" fill="none" stroke="#d4d7da" stroke-width="1"/><path d="M786 137.6 l8 -2.6 l4.4 1.6 l-8 3.4 z" fill="#d4d7da"/><circle cx="789.6" cy="134.6" r="1.8" fill="#d4d7da"/><path d="M796.6 137.6 l-5 7" stroke="#f0a93a" stroke-width="1.4"/><path d="M785 146.6 l5 -3.4 l2 1.6 l-4.6 4 z" fill="#4a90e8"/></svg>
<span class="t" style="left:803.6px;top:109px;line-height:18px;font-size:13px;color:#f2f2f2;letter-spacing:-0.513px;">Make Current</span>
<span class="t" style="left:803.6px;top:133px;line-height:18px;font-size:13px;color:#f2f2f2;letter-spacing:-0.504px;">Match Layer</span>
<div style="left:932px;top:100px;width:1px;height:55px;background:#45494e;"></div>
<span class="t" style="left:752.6px;top:158px;line-height:13px;font-size:9.4px;color:#b3bdc8;font-weight:700;font-family:'DejaVu Sans','Liberation Sans',sans-serif;letter-spacing:0.817px;-webkit-text-stroke:0.3px #b3bdc8;">LAYERS</span>
<svg style="left:801px;top:162.4px;" width="6.4" height="5.2" viewBox="0 0 6.4 5.2"><path d="M0.3 1 L3.2 3.8000000000000003 L6.1000000000000005 1" fill="none" stroke="#8d97a2" stroke-width="1"/></svg>
<svg style="left:938px;top:79px;" width="70" height="75" viewBox="938 79 70 75"><path d="M949.8 92.6 A10 10 0 1 0 962.9 105" fill="none" stroke="#c2c5c8" stroke-width="1.05"/><rect x="952.4" y="83.8" width="18.4" height="17" fill="#2b2f33" stroke="#d4d7da" stroke-width="1.1"/><path d="M955.6 91.6 l4.6 2.6" stroke="#d4d7da" stroke-width="1"/><rect x="969.2" y="99.4" width="2.6" height="2.6" fill="#d4d7da"/><path d="M962.4 114 q1.6 -6.4 10.6 -6.6 M970 104.2 l3.6 3.2 l-3.6 3.4" fill="none" stroke="#4cb84a" stroke-width="1.4"/><path d="M990 91 A4.6 4.6 0 1 0 994.6 97.6" fill="none" stroke="#d4d7da" stroke-width="1"/><rect x="991.6" y="84.6" width="10" height="8.6" fill="#2b2f33" stroke="#d4d7da" stroke-width="1"/><path d="M994 88 l2.6 2" stroke="#d4d7da" stroke-width="1"/><path d="M999.6 92.6 v7 M996 96 h7.2 M997 93.6 l5.2 5 M1002.2 93.6 l-5.2 5" stroke="#f0a93a" stroke-width="1.2"/><path d="M990 115 A4.6 4.6 0 1 0 994.6 121.6" fill="none" stroke="#d4d7da" stroke-width="1"/><rect x="991.6" y="108.6" width="10" height="8.6" fill="#2b2f33" stroke="#d4d7da" stroke-width="1"/><path d="M994 112 l2.6 2" stroke="#d4d7da" stroke-width="1"/><path d="M993.6 123.6 l1 -3 l6 -5.4 l2 2 l-6 5.4 z" fill="#f0a93a" stroke="#2b2f33" stroke-width="0.5"/><path d="M1000.6 115.2 l1.2 -1 l2 2 l-1.2 1 z" fill="#4a90e8"/><path d="M986 141 l4.4 -4.4 h5 l2.4 5 l-6.4 6 l-5.4 -4 z" fill="none" stroke="#d4d7da" stroke-width="1.2"/><circle cx="990.6" cy="140.6" r="1.2" fill="none" stroke="#d4d7da" stroke-width="0.9"/><path d="M993 141 l6.6 -7 l1.8 1.6 l-6.6 7 l-2.4 0.8 z" fill="#f0a93a" stroke="#2b2f33" stroke-width="0.5"/></svg>
<span class="t" style="left:944.4px;top:118px;line-height:18px;font-size:13px;color:#f2f2f2;letter-spacing:-0.486px;">Insert</span>
<span class="t" style="left:939.7px;top:132px;line-height:18px;font-size:13px;color:#f2f2f2;letter-spacing:-0.578px;">Block...</span>
<svg style="left:1005px;top:138px;" width="6" height="4" viewBox="0 0 6 4"><path d="M0.3 0.5 H5.7 L3 3.6 Z" fill="#e6e6e6"/></svg>
<div style="left:1018px;top:100px;width:1px;height:55px;background:#45494e;"></div>
<span class="t" style="left:947.8px;top:158px;line-height:13px;font-size:9.4px;color:#b3bdc8;font-weight:700;font-family:'DejaVu Sans','Liberation Sans',sans-serif;letter-spacing:-0.076px;-webkit-text-stroke:0.3px #b3bdc8;">BLOCKS</span>
<svg style="left:996px;top:162.4px;" width="6.4" height="5.2" viewBox="0 0 6.4 5.2"><path d="M0.3 1 L3.2 3.8000000000000003 L6.1000000000000005 1" fill="none" stroke="#8d97a2" stroke-width="1"/></svg>
<svg style="left:1026px;top:84px;" width="34" height="32" viewBox="1026 84 34 32"><path d="M1030.2 100.6 L1040.2 94.8 L1049.8 103.4 L1040.8 112 Z" fill="none" stroke="#f0a93a" stroke-width="1.25" stroke-linejoin="round"/><path d="M1033.4 102.4 L1048.6 104.2 L1040.8 111.4 Z" fill="#b98a3a"/><path d="M1041.4 94 L1044.8 91.4 L1046.6 93.8 L1053.8 89.4 Q1055.6 88.6 1056.4 90.2 Q1057 91.6 1055.8 92.6 L1049.4 98 L1051 100.6 L1048.4 102.2" fill="none" stroke="#d4d7da" stroke-width="1.15" stroke-linejoin="round"/></svg>
<span class="t" style="left:1027.5px;top:125px;line-height:18px;font-size:13px;color:#f2f2f2;letter-spacing:-0.281px;">Match</span>
<div style="left:1069px;top:80px;width:160px;height:23.6px;background:#292c30;border:1px solid #565a5f;border-radius:4px;box-sizing:border-box;"></div>
<div style="left:1069px;top:104.6px;width:160px;height:23.4px;background:#292c30;border:1px solid #565a5f;border-radius:4px;box-sizing:border-box;"></div>
<div style="left:1069px;top:129px;width:135px;height:23px;background:#292c30;border:1px solid #565a5f;border-radius:4px;box-sizing:border-box;"></div>
<div style="left:1074px;top:86px;width:13px;height:13px;background:#fff;border:1px solid #111;box-sizing:border-box;"></div>
<span class="t" style="left:1092.3px;top:84px;line-height:18px;font-size:13px;color:#f2f2f2;letter-spacing:-0.715px;">ByLayer</span>
<div style="left:1074px;top:115px;width:52px;height:1px;background:#f0f0f0;"></div>
<span class="t" style="left:1130.3px;top:108px;line-height:18px;font-size:13px;color:#f2f2f2;letter-spacing:-0.743px;">ByLayer</span>
<div style="left:1074px;top:140px;width:44px;height:1px;background:#f0f0f0;"></div>
<span class="t" style="left:1122.5px;top:132px;line-height:18px;font-size:13px;color:#f2f2f2;letter-spacing:-0.743px;">ByLayer</span>
<svg style="left:1209.6px;top:89.2px;" width="7" height="5.7" viewBox="0 0 7 5.7"><path d="M0.3 1 L3.5 4.3 L6.7 1" fill="none" stroke="#b8bbbe" stroke-width="1.1"/></svg>
<svg style="left:1209.6px;top:112.8px;" width="7" height="5.7" viewBox="0 0 7 5.7"><path d="M0.3 1 L3.5 4.3 L6.7 1" fill="none" stroke="#b8bbbe" stroke-width="1.1"/></svg>
<svg style="left:1184.6px;top:137.2px;" width="7" height="5.7" viewBox="0 0 7 5.7"><path d="M0.3 1 L3.5 4.3 L6.7 1" fill="none" stroke="#b8bbbe" stroke-width="1.1"/></svg>
<svg style="left:1208px;top:133px;" width="18" height="14" viewBox="0 0 18 14"><path d="M1 3.6 h16 M1 10.4 h16" stroke="#d4d7da" stroke-width="1.1"/><circle cx="5.4" cy="3.6" r="2" fill="#2b2f33" stroke="#d4d7da" stroke-width="1.1"/><circle cx="12" cy="10.4" r="2" fill="#2b2f33" stroke="#d4d7da" stroke-width="1.1"/></svg>
<div style="left:1232px;top:100px;width:1px;height:55px;background:#45494e;"></div>
<span class="t" style="left:1083.4px;top:158px;line-height:13px;font-size:9.4px;color:#b3bdc8;font-weight:700;font-family:'DejaVu Sans','Liberation Sans',sans-serif;letter-spacing:0.473px;-webkit-text-stroke:0.3px #b3bdc8;">PROPERTIES</span>
<svg style="left:1160px;top:162.4px;" width="6.4" height="5.2" viewBox="0 0 6.4 5.2"><path d="M0.3 1 L3.2 3.8000000000000003 L6.1000000000000005 1" fill="none" stroke="#8d97a2" stroke-width="1"/></svg>
<svg style="left:1238px;top:79px;" width="72" height="75" viewBox="1238 79 72 75"><circle cx="1252" cy="103.4" r="7.6" fill="none" stroke="#d4d7da" stroke-width="1.2"/><rect x="1252.4" y="87.6" width="13" height="13" fill="#2b2f33" stroke="#d4d7da" stroke-width="1.2"/><path d="M1252.4 96 a7.6 7.6 0 0 1 6 4.6" fill="none" stroke="#d4d7da" stroke-width="1.2"/><path d="M1268 83.6 q4 0.4 4 4 v8 q0 3 3.4 3.4 q-3.4 0.4 -3.4 3.4 v8 q0 3.6 -4 4" fill="none" stroke="#d4d7da" stroke-width="1.3"/><circle cx="1292.6" cy="94" r="3.4" fill="none" stroke="#9a9da0" stroke-width="1"/><rect x="1294" y="88" width="6.4" height="6.4" fill="#2b2f33" stroke="#9a9da0" stroke-width="1"/><path d="M1300 84 h2.6 v5.4 l1.4 1.4 l-1.4 1.4 v5.4 h-2.6" fill="none" stroke="#d4d7da" stroke-width="1.1"/><path d="M1299.6 94.6 l4.4 4.4 M1304 94.6 l-4.4 4.4" stroke="#e24a4a" stroke-width="1.3"/><circle cx="1292.6" cy="118" r="3.4" fill="none" stroke="#9a9da0" stroke-width="1"/><rect x="1294" y="112" width="6.4" height="6.4" fill="#2b2f33" stroke="#9a9da0" stroke-width="1"/><path d="M1300 108 h2.6 v5.4 l1.4 1.4 l-1.4 1.4 v5.4 h-2.6" fill="none" stroke="#d4d7da" stroke-width="1.1"/><path d="M1294 132.6 h-3 v14.4 h3 M1300 132.6 h2.6 v6" fill="none" stroke="#d4d7da" stroke-width="1.1"/><rect x="1293.6" y="135.6" width="4.4" height="3.6" fill="none" stroke="#4cb84a" stroke-width="1.1"/><circle cx="1295.8" cy="143.4" r="2.2" fill="none" stroke="#4cb84a" stroke-width="1.1"/><path d="M1299.6 140.6 l1 6 l1.6 -1.4 l1.4 2.4 l1 -0.6 l-1.4 -2.4 l2 -0.6 z" fill="#9a9da0"/></svg>
<span class="t" style="left:1239.4px;top:125px;line-height:18px;font-size:13px;color:#f2f2f2;letter-spacing:-0.721px;">Group...</span>
<div style="left:1312px;top:100px;width:1px;height:55px;background:#45494e;"></div>
<span class="t" style="left:1250.3px;top:158px;line-height:13px;font-size:9.4px;color:#b3bdc8;font-weight:700;font-family:'DejaVu Sans','Liberation Sans',sans-serif;letter-spacing:0.263px;-webkit-text-stroke:0.3px #b3bdc8;">GROUPS</span>
<svg style="left:1318px;top:79px;" width="76" height="75" viewBox="1318 79 76 75"><rect x="1327.2" y="94.8" width="31.6" height="8.6" fill="none" stroke="#f0a93a" stroke-width="1.2"/><path d="M1330.5 95 v4.6" stroke="#f0a93a" stroke-width="1"/><path d="M1334.1 95 v3" stroke="#f0a93a" stroke-width="1"/><path d="M1337.7 95 v4.6" stroke="#f0a93a" stroke-width="1"/><path d="M1341.3 95 v3" stroke="#f0a93a" stroke-width="1"/><path d="M1344.9 95 v4.6" stroke="#f0a93a" stroke-width="1"/><path d="M1348.5 95 v3" stroke="#f0a93a" stroke-width="1"/><path d="M1352.1 95 v4.6" stroke="#f0a93a" stroke-width="1"/><path d="M1355.7 95 v3" stroke="#f0a93a" stroke-width="1"/><path transform="translate(1376.4 86.4) scale(1)" d="M0 0 l2.4 10.4 l2.6 -3 l3.4 4.4 l1.6 -1.2 l-3.4 -4.4 l4 -1 z" fill="#2b2f33" stroke="#d4d7da" stroke-width="1.1"/><rect x="1374.4" y="108.6" width="15" height="15" fill="none" stroke="#d4d7da" stroke-width="1" stroke-dasharray="1.2 1.2"/><path transform="translate(1378.4 111.6) scale(0.8)" d="M0 0 l2.4 10.4 l2.6 -3 l3.4 4.4 l1.6 -1.2 l-3.4 -4.4 l4 -1 z" fill="#2b2f33" stroke="#d4d7da" stroke-width="1.1"/><rect x="1375.6" y="132.4" width="13" height="15" rx="1" fill="none" stroke="#d4d7da" stroke-width="1.2"/><rect x="1378" y="134.8" width="8.2" height="2.4" fill="none" stroke="#d4d7da" stroke-width="1"/><rect x="1378" y="139.6" width="3.2" height="2" fill="none" stroke="#d4d7da" stroke-width="1"/><rect x="1383" y="139.6" width="3.2" height="2" fill="none" stroke="#d4d7da" stroke-width="1"/><rect x="1378" y="143.4" width="3.2" height="2" fill="none" stroke="#d4d7da" stroke-width="1"/><rect x="1383" y="143.4" width="3.2" height="2" fill="none" stroke="#d4d7da" stroke-width="1"/></svg>
<span class="t" style="left:1319.4px;top:125px;line-height:18px;font-size:13px;color:#f2f2f2;letter-spacing:-0.511px;">Measure</span>
<svg style="left:1339px;top:149px;" width="6" height="4" viewBox="0 0 6 4"><path d="M0.3 0.5 H5.7 L3 3.6 Z" fill="#e6e6e6"/></svg>
<div style="left:1397px;top:100px;width:1px;height:55px;background:#45494e;"></div>
<span class="t" style="left:1321px;top:158px;line-height:13px;font-size:9.4px;color:#b3bdc8;font-weight:700;font-family:'DejaVu Sans','Liberation Sans',sans-serif;letter-spacing:0.467px;-webkit-text-stroke:0.3px #b3bdc8;">UTILITIES</span>
<svg style="left:1382px;top:162.4px;" width="6.4" height="5.2" viewBox="0 0 6.4 5.2"><path d="M0.3 1 L3.2 3.8000000000000003 L6.1000000000000005 1" fill="none" stroke="#8d97a2" stroke-width="1"/></svg>
<svg style="left:1404px;top:79px;" width="64" height="75" viewBox="1404 79 64 75"><path d="M1413.6 86.6 h-5 v22 h13" fill="none" stroke="#f0a93a" stroke-width="1.3"/><path d="M1424.6 86.6 h5 v4" fill="none" stroke="#f0a93a" stroke-width="1.3"/><path d="M1413.6 88 v-2 h3 v-1.6 h5 v1.6 h3 v2 z" fill="none" stroke="#d4d7da" stroke-width="1"/><path d="M1422.4 91.2 h10 l5.6 5.6 v14.6 h-15.6 z" fill="#2b2f33" stroke="#d4d7da" stroke-width="1.3"/><path d="M1432.4 91.2 v5.6 h5.6 z" fill="#d4d7da"/><path d="M1455 85 l5.6 11.4 M1461 85 l-5.6 11.4" stroke="#d4d7da" stroke-width="1.1"/><circle cx="1454.6" cy="98.2" r="1.8" fill="none" stroke="#4a90e8" stroke-width="1.2"/><circle cx="1461.4" cy="98.2" r="1.8" fill="none" stroke="#4a90e8" stroke-width="1.2"/><path d="M1449.2 108.6 h5 l2.6 2.6 v7 h-7.6 z" fill="none" stroke="#d4d7da" stroke-width="1.2"/><path d="M1455 114.2 h5 l2.6 2.6 v7 h-7.6 z" fill="#2b2f33" stroke="#d4d7da" stroke-width="1.2"/></svg>
<span class="t" style="left:1407.2px;top:125px;line-height:18px;font-size:13px;color:#f2f2f2;letter-spacing:-0.45px;">Paste</span>
<svg style="left:1419px;top:149px;" width="6" height="4" viewBox="0 0 6 4"><path d="M0.3 0.5 H5.7 L3 3.6 Z" fill="#e6e6e6"/></svg>
<svg style="left:1468px;top:114px;" width="6" height="4" viewBox="0 0 6 4"><path d="M0.3 0.5 H5.7 L3 3.6 Z" fill="#e6e6e6"/></svg>
<span class="t" style="left:1409.2px;top:158px;line-height:13px;font-size:9.4px;color:#b3bdc8;font-weight:700;font-family:'DejaVu Sans','Liberation Sans',sans-serif;letter-spacing:0.095px;-webkit-text-stroke:0.3px #b3bdc8;">CLIPBOARD</span>
<div style="left:0px;top:188px;width:1541px;height:21px;background:#2d3235;"></div>
<div style="left:0px;top:208px;width:1265px;height:1px;background:#62666a;"></div>
<div style="left:0px;top:192px;width:62px;height:16px;background:#1b1d20;"></div>
<span class="t" style="left:7.4px;top:191px;line-height:17px;font-size:12px;color:#f0f0f0;letter-spacing:-0.949px;">Start</span>
<svg style="left:46.5px;top:194.5px;" width="10" height="10" viewBox="0 0 10 10"><path d="M1 1 L9 9 M9 1 L1 9" stroke="#dcdcdc" stroke-width="1.7"/></svg>
<span class="t" style="left:74.6px;top:191px;line-height:17px;font-size:12px;color:#ffffff;font-weight:700;letter-spacing:-0.076px;">Drawing1*</span>
<svg style="left:147px;top:194.5px;" width="10" height="10" viewBox="0 0 10 10"><path d="M1 1 L9 9 M9 1 L1 9" stroke="#dcdcdc" stroke-width="1.7"/></svg>
<div style="left:164px;top:192px;width:25px;height:15.5px;background:#1b1d20;"></div>
<svg style="left:173.5px;top:194.5px;" width="10" height="10" viewBox="0 0 10 10"><path d="M5 0.4 V9.6 M0.4 5 H9.6" stroke="#f0f0f0" stroke-width="1.15"/></svg>
<svg style="left:1418px;top:193px;" width="15" height="3" viewBox="0 0 15 3"><rect x="0" y="0.4" width="2" height="1.8" fill="#e0e0e0"/><rect x="3" y="0.4" width="2" height="1.8" fill="#e0e0e0"/><rect x="6" y="0.4" width="2" height="1.8" fill="#e0e0e0"/><rect x="9" y="0.4" width="2" height="1.8" fill="#e0e0e0"/><rect x="12" y="0.4" width="2" height="1.8" fill="#e0e0e0"/></svg>
<div style="left:0px;top:209px;width:1264px;height:610px;background:#1a1c1e;"></div>
<div style="left:1264px;top:209px;width:1px;height:610px;background:#5a5e62;"></div>
<div style="left:1265px;top:209px;width:276px;height:610px;background:#2d3235;"></div>
<svg style="left:440px;top:220px;shape-rendering:crispEdges;" width="460" height="395" viewBox="440 220 460 395"><path d="M448.5 411.5 H610.5 V474.5 H770.5 V229.5 H887.5 V607.5 H448.5 Z" fill="none" stroke="#fdfdfd" stroke-width="1"/></svg>
<div style="left:482px;top:441px;width:9px;height:9px;background:#68c60a;"></div>
<svg style="left:1120px;top:224px;" width="130" height="130" viewBox="0 0 130 130"><circle cx="65" cy="65" r="53" fill="none" stroke="#5a5d60" stroke-width="11.6"/></svg>
<div style="left:1164px;top:268px;width:42px;height:42px;background:#27292c;border:1px solid #4b4d50;box-sizing:border-box;border-radius:1px;"></div>
<span class="t" style="left:1172px;top:281px;line-height:18px;font-size:13px;color:#f4f4f4;font-weight:700;letter-spacing:-0.167px;text-shadow:0 1px 0 #000;">TOP</span>
<svg style="left:60px;top:664px;" width="90" height="90" viewBox="60 664 90 90"><path d="M72.5 686 V720 M94.5 741.5 H128" stroke="#f4f4f4" stroke-width="1" fill="none" shape-rendering="crispEdges"/><path d="M72.5 720 V741.5 M94.5 720 V741.5" stroke="#2ea660" stroke-width="1" shape-rendering="crispEdges"/><path d="M72.5 719.5 H94.5 M72.5 741.5 H94.5" stroke="#d45a5a" stroke-width="1" shape-rendering="crispEdges"/></svg>
<span class="t" style="left:67.6px;top:665px;line-height:22px;font-size:16px;color:#2ea660;transform:scaleX(0.98);transform-origin:0 50%;">Y</span>
<span class="t" style="left:133.8px;top:730px;line-height:24px;font-size:17px;color:#d45a5a;transform:scaleX(0.86);transform-origin:0 50%;">X</span>
<span class="t" style="left:80px;top:719px;line-height:23px;font-size:16.5px;color:#f4f4f4;transform:scaleX(0.81);transform-origin:0 50%;">W</span>
<div style="left:159px;top:623px;width:940px;height:167px;background:#7a7a7a;"></div>
<div style="left:1082px;top:626px;width:17px;height:164px;background:#dcdcdc;"></div>
<div style="left:1090px;top:753px;width:1px;height:17px;background:#8a8a8a;"></div>
<div style="left:1091px;top:753px;width:1px;height:17px;background:#6e6e6e;"></div>
<span class="t" style="left:164.2px;top:664px;line-height:16px;font-size:11.6px;color:#f2f2f2;font-family:'DejaVu Sans Mono','Liberation Mono',monospace;letter-spacing:-0.01px;">--- 2. KONTROLA POZÍCIE BODU ---</span>
<span class="t" style="left:164.2px;top:678px;line-height:16px;font-size:11.6px;color:#f2f2f2;font-family:'DejaVu Sans Mono','Liberation Mono',monospace;letter-spacing:-0.01px;">Bod sa nachádza VNÚTRI polyline.</span>
<span class="t" style="left:164.2px;top:694px;line-height:16px;font-size:11.6px;color:#f2f2f2;font-family:'DejaVu Sans Mono','Liberation Mono',monospace;letter-spacing:-0.01px;">========================================</span>
<span class="t" style="left:164.2px;top:738px;line-height:16px;font-size:11.6px;color:#f2f2f2;font-family:'DejaVu Sans Mono','Liberation Mono',monospace;letter-spacing:-0.01px;">--- 3. KONTROLA POZÍCIE BODU ---</span>
<span class="t" style="left:164.2px;top:754px;line-height:16px;font-size:11.6px;color:#f2f2f2;font-family:'DejaVu Sans Mono','Liberation Mono',monospace;letter-spacing:-0.01px;">Bod sa nachádza VNÚTRI polyline.</span>
<span class="t" style="left:164.2px;top:768px;line-height:16px;font-size:11.6px;color:#f2f2f2;font-family:'DejaVu Sans Mono','Liberation Mono',monospace;letter-spacing:-0.01px;">========================================</span>
<div style="left:159px;top:795px;width:940px;height:18px;background:#2c2f33;"></div>
<svg style="left:162.4px;top:796px;" width="3" height="16" viewBox="0 0 3 16"><rect x="0" y="0.0" width="2" height="1.8" fill="#e0e0e0"/><rect x="0" y="2.9" width="2" height="1.8" fill="#e0e0e0"/><rect x="0" y="5.8" width="2" height="1.8" fill="#e0e0e0"/><rect x="0" y="8.7" width="2" height="1.8" fill="#e0e0e0"/><rect x="0" y="11.6" width="2" height="1.8" fill="#e0e0e0"/><rect x="0" y="14.5" width="2" height="1.8" fill="#e0e0e0"/></svg>
<span class="t" style="left:170px;top:796px;line-height:16px;font-size:11.6px;color:#d8d8d8;font-weight:700;font-family:'DejaVu Sans Mono','Liberation Mono',monospace;">:</span>
<span class="t" style="left:184px;top:796px;line-height:16px;font-size:11.6px;color:#b8b8b8;font-family:'DejaVu Sans Mono','Liberation Mono',monospace;font-style:italic;letter-spacing:0.019px;">Enter command</span>
<svg style="left:1078px;top:799px;" width="12" height="8" viewBox="0 0 12 8"><path d="M1.9 6.2 L6.5 0.8 L11.1 6.2 Z" fill="#f4f4f4"/></svg>
<div style="left:1002px;top:773px;width:1px;height:44px;background:#2e9c5e;"></div>
<div style="left:958px;top:817px;width:90px;height:2px;background:#a96464;"></div>
<svg style="left:997px;top:813px;" width="10" height="6" viewBox="0 0 10 6"><rect x="0.5" y="0.5" width="8" height="5" fill="none" stroke="#e8e8e8" stroke-width="1"/></svg>
<div style="left:1272px;top:204px;width:218px;height:23px;background:#41454a;"></div>
<span class="t" style="left:1277px;top:207px;line-height:18px;font-size:13px;color:#f2f2f2;letter-spacing:-0.128px;">Point</span>
<svg style="left:1477px;top:215.4px;" width="8" height="6" viewBox="0 0 8 6"><path d="M0.3 1 L4.0 4.6 L7.7 1" fill="none" stroke="#d8dadc" stroke-width="1.2"/></svg>
<svg style="left:1498px;top:207px;" width="18" height="17" viewBox="0 0 18 17"><path d="M1.3 1.2 H13.7 L9 8 V14.6 L6.6 12.4 V8 Z" fill="none" stroke="#d4d7da" stroke-width="1"/><path d="M14.2 7.6 l-4 4.6 h2.6 l-1.6 3.8 l5.2 -5.2 h-2.8 l2 -3.2 z" fill="#f5b81e"/></svg>
<div style="left:1518px;top:204px;width:22px;height:21px;background:#cfe5fc;border-radius:3px;"></div>
<svg style="left:1522px;top:208px;" width="16" height="14" viewBox="0 0 16 14"><ellipse cx="8" cy="6.8" rx="7.6" ry="4.4" fill="#e6f0fc"/><circle cx="7.9" cy="6.9" r="4.1" fill="#3f80dc"/><circle cx="7.9" cy="6.9" r="2.3" fill="#13295e"/><path d="M7.9 6.9 L5.6 5.6 A2.6 2.6 0 0 1 7 4.5 Z" fill="#f4f8ff"/></svg>
<div style="left:1282px;top:232px;width:1px;height:437px;background:#484c51;"></div>
<div style="left:1283px;top:232px;width:258px;height:19px;background:#40444a;"></div>
<span class="t" style="left:1286px;top:233px;line-height:18px;font-size:12.5px;color:#ffffff;font-weight:700;letter-spacing:-0.08px;">General</span>
<svg style="left:1270px;top:237px;" width="10" height="10" viewBox="0 0 10 10"><rect x="0.5" y="0.5" width="8.6" height="8.6" fill="#d6d8da" stroke="#f4f4f4" stroke-width="0.8"/><rect x="2" y="4" width="5.6" height="1.6" fill="#2b2f33"/></svg>
<div style="left:1283px;top:269px;width:258px;height:1px;background:#484c51;"></div>
<div style="left:1367px;top:251px;width:1px;height:18px;background:#484c51;"></div>
<span class="t" style="left:1287px;top:253px;line-height:17px;font-size:12px;color:#f2f2f2;letter-spacing:-0.172px;">Handle</span>
<span class="t" style="left:1372px;top:253px;line-height:17px;font-size:12px;color:#85898e;letter-spacing:-0.094px;">A4</span>
<div style="left:1283px;top:288px;width:258px;height:1px;background:#484c51;"></div>
<div style="left:1367px;top:270px;width:1px;height:18px;background:#484c51;"></div>
<span class="t" style="left:1287px;top:272px;line-height:17px;font-size:12px;color:#f2f2f2;letter-spacing:-0.037px;">Color</span>
<div style="left:1374px;top:273px;width:14px;height:13px;background:#fff;border:1px solid #151515;box-sizing:border-box;"></div>
<span class="t" style="left:1394.5px;top:272px;line-height:17px;font-size:12px;color:#f2f2f2;letter-spacing:-0.29px;">ByLayer</span>
<div style="left:1283px;top:307px;width:258px;height:1px;background:#484c51;"></div>
<div style="left:1367px;top:289px;width:1px;height:18px;background:#484c51;"></div>
<span class="t" style="left:1287px;top:291px;line-height:17px;font-size:12px;color:#f2f2f2;letter-spacing:-0.206px;">Layer</span>
<span class="t" style="left:1372px;top:291px;line-height:17px;font-size:12px;color:#f2f2f2;letter-spacing:-0.188px;">0</span>
<div style="left:1283px;top:326px;width:258px;height:1px;background:#484c51;"></div>
<div style="left:1367px;top:308px;width:1px;height:18px;background:#484c51;"></div>
<span class="t" style="left:1287px;top:310px;line-height:17px;font-size:12px;color:#f2f2f2;letter-spacing:0.203px;">Linetype</span>
<div style="left:1375px;top:317px;width:89px;height:1px;background:#f0f0f0;"></div>
<span class="t" style="left:1469px;top:310px;line-height:17px;font-size:12px;color:#f2f2f2;letter-spacing:-0.29px;">ByLayer</span>
<div style="left:1283px;top:345px;width:258px;height:1px;background:#484c51;"></div>
<div style="left:1367px;top:327px;width:1px;height:18px;background:#484c51;"></div>
<span class="t" style="left:1287px;top:329px;line-height:17px;font-size:12px;color:#f2f2f2;letter-spacing:-0.016px;">Linetype scale</span>
<span class="t" style="left:1372px;top:329px;line-height:17px;font-size:12px;color:#f2f2f2;letter-spacing:-1.688px;">1</span>
<div style="left:1283px;top:364px;width:258px;height:1px;background:#484c51;"></div>
<div style="left:1367px;top:346px;width:1px;height:18px;background:#484c51;"></div>
<span class="t" style="left:1287px;top:348px;line-height:17px;font-size:12px;color:#f2f2f2;letter-spacing:0.131px;">Plot style</span>
<span class="t" style="left:1372px;top:348px;line-height:17px;font-size:12px;color:#85898e;letter-spacing:-0.312px;">ByColor</span>
<div style="left:1283px;top:383px;width:258px;height:1px;background:#484c51;"></div>
<div style="left:1367px;top:365px;width:1px;height:18px;background:#484c51;"></div>
<span class="t" style="left:1287px;top:367px;line-height:17px;font-size:12px;color:#f2f2f2;letter-spacing:0.362px;">Lineweight</span>
<div style="left:1375px;top:374px;width:88px;height:1px;background:#f0f0f0;"></div>
<span class="t" style="left:1468px;top:367px;line-height:17px;font-size:12px;color:#f2f2f2;letter-spacing:-0.29px;">ByLayer</span>
<div style="left:1283px;top:402px;width:258px;height:1px;background:#484c51;"></div>
<div style="left:1367px;top:384px;width:1px;height:18px;background:#484c51;"></div>
<span class="t" style="left:1288px;top:386px;line-height:17px;font-size:12px;color:#f2f2f2;letter-spacing:-0.118px;">Transparency</span>
<span class="t" style="left:1372px;top:386px;line-height:17px;font-size:12px;color:#f2f2f2;letter-spacing:-0.29px;">ByLayer</span>
<div style="left:1283px;top:421px;width:258px;height:1px;background:#484c51;"></div>
<div style="left:1367px;top:403px;width:1px;height:18px;background:#484c51;"></div>
<span class="t" style="left:1287px;top:405px;line-height:17px;font-size:12px;color:#f2f2f2;letter-spacing:-0.113px;">Hyperlink</span>
<div style="left:1283px;top:440px;width:258px;height:1px;background:#484c51;"></div>
<div style="left:1367px;top:422px;width:1px;height:18px;background:#484c51;"></div>
<span class="t" style="left:1287px;top:424px;line-height:17px;font-size:12px;color:#f2f2f2;letter-spacing:-0.049px;">History</span>
<span class="t" style="left:1372px;top:424px;line-height:17px;font-size:12px;color:#f2f2f2;letter-spacing:0.283px;">Current</span>
<div style="left:1283px;top:459px;width:258px;height:1px;background:#484c51;"></div>
<div style="left:1367px;top:441px;width:1px;height:18px;background:#484c51;"></div>
<span class="t" style="left:1287px;top:443px;line-height:17px;font-size:12px;color:#f2f2f2;letter-spacing:-0.17px;">Thickness</span>
<span class="t" style="left:1372px;top:443px;line-height:17px;font-size:12px;color:#f2f2f2;letter-spacing:0.25px;">0 mm</span>
<div style="left:1283px;top:460px;width:258px;height:19px;background:#40444a;"></div>
<span class="t" style="left:1286px;top:461px;line-height:18px;font-size:12.5px;color:#ffffff;font-weight:700;letter-spacing:0.085px;">3D Visualization</span>
<svg style="left:1270px;top:465px;" width="10" height="10" viewBox="0 0 10 10"><rect x="0.5" y="0.5" width="8.6" height="8.6" fill="#d6d8da" stroke="#f4f4f4" stroke-width="0.8"/><rect x="2" y="4" width="5.6" height="1.6" fill="#2b2f33"/></svg>
<div style="left:1283px;top:497px;width:258px;height:1px;background:#484c51;"></div>
<div style="left:1367px;top:479px;width:1px;height:18px;background:#484c51;"></div>
<span class="t" style="left:1287px;top:481px;line-height:17px;font-size:12px;color:#f2f2f2;letter-spacing:-0.086px;">Material</span>
<span class="t" style="left:1372px;top:481px;line-height:17px;font-size:12px;color:#f2f2f2;letter-spacing:-0.29px;">ByLayer</span>
<div style="left:1283px;top:498px;width:258px;height:19px;background:#40444a;"></div>
<span class="t" style="left:1286px;top:499px;line-height:18px;font-size:12.5px;color:#ffffff;font-weight:700;letter-spacing:0.08px;">Geometry</span>
<svg style="left:1270px;top:503px;" width="10" height="10" viewBox="0 0 10 10"><rect x="0.5" y="0.5" width="8.6" height="8.6" fill="#d6d8da" stroke="#f4f4f4" stroke-width="0.8"/><rect x="2" y="4" width="5.6" height="1.6" fill="#2b2f33"/></svg>
<div style="left:1283px;top:535px;width:258px;height:1px;background:#484c51;"></div>
<div style="left:1367px;top:517px;width:1px;height:18px;background:#484c51;"></div>
<span class="t" style="left:1287px;top:519px;line-height:17px;font-size:12px;color:#f2f2f2;letter-spacing:-0.15px;">Position</span>
<svg style="left:1270px;top:522px;" width="10" height="10" viewBox="0 0 10 10"><rect x="0.5" y="0.5" width="8.6" height="8.6" fill="#d6d8da" stroke="#f4f4f4" stroke-width="0.8"/><rect x="2" y="4" width="5.6" height="1.6" fill="#2b2f33"/></svg>
<span class="t" style="left:1372px;top:519px;line-height:17px;font-size:12px;color:#f2f2f2;letter-spacing:0.391px;">172195.82, 40392.68, 0</span>
<div style="left:1283px;top:554px;width:258px;height:1px;background:#484c51;"></div>
<div style="left:1367px;top:536px;width:1px;height:18px;background:#484c51;"></div>
<span class="t" style="left:1306px;top:538px;line-height:17px;font-size:12px;color:#f2f2f2;letter-spacing:-1.016px;">X</span>
<span class="t" style="left:1372px;top:538px;line-height:17px;font-size:12px;color:#f2f2f2;letter-spacing:0.307px;">172195.82</span>
<div style="left:1283px;top:573px;width:258px;height:1px;background:#484c51;"></div>
<div style="left:1367px;top:555px;width:1px;height:18px;background:#484c51;"></div>
<span class="t" style="left:1306px;top:557px;line-height:17px;font-size:12px;color:#f2f2f2;letter-spacing:-0.516px;">Y</span>
<span class="t" style="left:1372px;top:557px;line-height:17px;font-size:12px;color:#f2f2f2;letter-spacing:0.367px;">40392.68</span>
<div style="left:1283px;top:592px;width:258px;height:1px;background:#484c51;"></div>
<div style="left:1367px;top:574px;width:1px;height:18px;background:#484c51;"></div>
<span class="t" style="left:1306px;top:576px;line-height:17px;font-size:12px;color:#f2f2f2;letter-spacing:-0.344px;">Z</span>
<span class="t" style="left:1372px;top:576px;line-height:17px;font-size:12px;color:#f2f2f2;letter-spacing:-0.188px;">0</span>
<div style="left:1283px;top:611px;width:258px;height:1px;background:#484c51;"></div>
<div style="left:1367px;top:593px;width:1px;height:18px;background:#484c51;"></div>
<span class="t" style="left:1287px;top:595px;line-height:17px;font-size:12px;color:#f2f2f2;letter-spacing:-0.234px;">UCS Elevation</span>
<svg style="left:1270px;top:598px;" width="10" height="10" viewBox="0 0 10 10"><rect x="0.5" y="0.5" width="8.6" height="8.6" fill="#d6d8da" stroke="#f4f4f4" stroke-width="0.8"/><rect x="2" y="4" width="5.6" height="1.6" fill="#2b2f33"/></svg>
<span class="t" style="left:1372px;top:595px;line-height:17px;font-size:12px;color:#85898e;letter-spacing:0.333px;">0 mm, 0 mm</span>
<div style="left:1283px;top:630px;width:258px;height:1px;background:#484c51;"></div>
<div style="left:1367px;top:612px;width:1px;height:18px;background:#484c51;"></div>
<span class="t" style="left:1306px;top:614px;line-height:17px;font-size:12px;color:#f2f2f2;letter-spacing:-0.096px;">Minimum</span>
<span class="t" style="left:1372px;top:614px;line-height:17px;font-size:12px;color:#85898e;letter-spacing:0.25px;">0 mm</span>
<div style="left:1283px;top:649px;width:258px;height:1px;background:#484c51;"></div>
<div style="left:1367px;top:631px;width:1px;height:18px;background:#484c51;"></div>
<span class="t" style="left:1306px;top:633px;line-height:17px;font-size:12px;color:#f2f2f2;letter-spacing:-0.145px;">Maximum</span>
<span class="t" style="left:1372px;top:633px;line-height:17px;font-size:12px;color:#85898e;letter-spacing:0.25px;">0 mm</span>
<div style="left:1283px;top:668px;width:258px;height:1px;background:#484c51;"></div>
<div style="left:1367px;top:650px;width:1px;height:18px;background:#484c51;"></div>
<span class="t" style="left:1287px;top:652px;line-height:17px;font-size:12px;color:#f2f2f2;letter-spacing:-0.241px;">Slope</span>
<span class="t" style="left:1372px;top:652px;line-height:17px;font-size:12px;color:#85898e;letter-spacing:-0.188px;">0</span>
<div style="left:0px;top:819px;width:1541px;height:26px;background:#181b1d;"></div>
<div style="left:0px;top:819px;width:1541px;height:1px;background:#44484d;"></div>
<div style="left:5px;top:829px;width:13px;height:1px;background:#5a5e63;"></div>
<div style="left:5px;top:833px;width:13px;height:1px;background:#5a5e63;"></div>
<div style="left:5px;top:837px;width:13px;height:1px;background:#5a5e63;"></div>
<div style="left:23px;top:821px;width:76px;height:24px;background:#2b2f33;"></div>
<svg style="left:35.5px;top:828px;" width="15" height="13" viewBox="0 0 15 13"><rect x="0.6" y="0.6" width="13.4" height="11.4" fill="none" stroke="#d4d7da" stroke-width="1.1"/><path d="M3 2.6 v6.8 h1.6" stroke="#d4d7da" stroke-width="1" fill="none"/><rect x="5.6" y="8.4" width="1.4" height="1.4" fill="#d4d7da"/><rect x="8.6" y="8.4" width="1.4" height="1.4" fill="#d4d7da"/></svg>
<span class="t" style="left:55.5px;top:827px;line-height:17px;font-size:12.0px;color:#ffffff;letter-spacing:-0.537px;">Model</span>
<span class="t" style="left:103.3px;top:826px;line-height:16px;font-size:11.5px;color:#d8d8d8;letter-spacing:-0.348px;">Layout1</span>
<div style="left:149px;top:822px;width:1px;height:23px;background:#3a3d41;"></div>
<span class="t" style="left:155.2px;top:826px;line-height:16px;font-size:11.5px;color:#d8d8d8;letter-spacing:-0.205px;">Layout2</span>
<svg style="left:207px;top:828px;" width="14" height="14" viewBox="0 0 14 14"><path d="M6.5 0.4 V13 M0.4 6.6 H13" stroke="#e8e8e8" stroke-width="1.2"/></svg>
<span class="t" style="left:324.2px;top:826px;line-height:16px;font-size:11.5px;color:#f2f2f2;letter-spacing:-0.412px;">205311.24, 16447.51, 0</span>
<svg style="left:446px;top:826px;" width="16" height="16" viewBox="0 0 16 16"><rect x="0.6" y="0.6" width="14.6" height="14.6" fill="none" stroke="#d4d7da" stroke-width="1.1"/><path d="M3.6 3.4 v8 h5" stroke="#d4d7da" stroke-width="1" fill="none"/><circle cx="3.8" cy="11.2" r="1.2" fill="none" stroke="#d4d7da" stroke-width="0.8"/><path d="M10 9.8 l2.4 2.8 M12.4 9.8 l-2.4 2.8" stroke="#d4d7da" stroke-width="0.8"/></svg>
<span class="t" style="left:466.7px;top:826px;line-height:16px;font-size:11.5px;color:#f2f2f2;letter-spacing:-1.021px;">MODEL</span>
<svg style="left:512px;top:831.2px;" width="8" height="6" viewBox="0 0 8 6"><path d="M0.3 1 L4.0 4.6 L7.7 1" fill="none" stroke="#c8cacc" stroke-width="1.1"/></svg>
<svg style="left:531px;top:826px;" width="16" height="17" viewBox="0 0 16 17"><path d="M8 1.4 V9 M8 9 L1.6 14 M8 9 L14.4 14" stroke="#4a90e8" stroke-width="1.3" fill="none"/><path d="M5 4.4 L8 1.2 L11 4.4 M1.2 10.6 V14.6 H5 M14.8 10.6 V14.6 H11" stroke="#4a90e8" stroke-width="1.2" fill="none"/></svg>
<span class="t" style="left:552.3px;top:826px;line-height:16px;font-size:11.5px;color:#f2f2f2;letter-spacing:-0.767px;">1:1</span>
<svg style="left:576.5px;top:831.2px;" width="8" height="6" viewBox="0 0 8 6"><path d="M0.3 1 L4.0 4.6 L7.7 1" fill="none" stroke="#c8cacc" stroke-width="1.1"/></svg>
<svg style="left:597px;top:828px;" width="14" height="14" viewBox="0 0 14 14"><path d="M4 0.6 V13 M8.6 0.6 V13" stroke="#e4e4e4" stroke-width="1.2"/><path d="M0.4 4.4 H12.8 M0.4 9 H12.8" stroke="#e4e4e4" stroke-width="1.2"/></svg>
<span class="t" style="left:616.2px;top:826px;line-height:16px;font-size:11.5px;color:#f2f2f2;letter-spacing:-0.938px;">GRID</span>
<svg style="left:652px;top:828px;" width="14" height="14" viewBox="0 0 14 14"><path d="M4 0.6 V13 M8.6 0.6 V13" stroke="#8a8d90" stroke-width="1.2"/><path d="M0.4 4.4 H12.8 M0.4 9 H12.8" stroke="#8a8d90" stroke-width="1.2"/><path d="M4 4.4 V9 M3.4 9 H8.6" stroke="#d04a4a" stroke-width="1.3"/></svg>
<span class="t" style="left:671.2px;top:826px;line-height:16px;font-size:11.5px;color:#f2f2f2;letter-spacing:-0.582px;">SNAP</span>
<svg style="left:709px;top:831.2px;" width="8" height="6" viewBox="0 0 8 6"><path d="M0.3 1 L4.0 4.6 L7.7 1" fill="none" stroke="#c8cacc" stroke-width="1.1"/></svg>
<svg style="left:730px;top:827px;" width="13" height="14" viewBox="0 0 13 14"><path d="M2.6 1 V12.4" stroke="#4cb84a" stroke-width="1.3"/><path d="M2 12.4 H12" stroke="#e24a4a" stroke-width="1.3"/><path d="M3 7.6 H7.6 V12" stroke="#d4d7da" stroke-width="1" fill="none"/></svg>
<span class="t" style="left:749px;top:826px;line-height:16px;font-size:11.5px;color:#f2f2f2;letter-spacing:-0.766px;">ORTHO</span>
<div style="left:792px;top:824px;width:82px;height:20px;background:#182741;border:1px solid #3f7fe0;border-radius:3px;box-sizing:border-box;"></div>
<div style="left:855.5px;top:825px;width:1px;height:18px;background:#3f7fe0;"></div>
<svg style="left:797px;top:827px;" width="14" height="14" viewBox="0 0 14 14"><path d="M12.4 6.8 A5.6 5.6 0 1 1 9.4 2.4" fill="none" stroke="#d4d7da" stroke-width="1.1"/><path d="M6.8 7.4 L12.8 1.4 M6.8 7.4 H13" stroke="#d4d7da" stroke-width="1"/></svg>
<span class="t" style="left:816.3px;top:826px;line-height:16px;font-size:11.5px;color:#f2f2f2;letter-spacing:-0.8px;">POLAR</span>
<svg style="left:861px;top:831.2px;" width="7" height="5.6" viewBox="0 0 7 5.6"><path d="M0.3 1 L3.5 4.2 L6.7 1" fill="none" stroke="#c8cacc" stroke-width="1.1"/></svg>
<div style="left:877px;top:824px;width:68px;height:20px;background:#182741;border:1px solid #3f7fe0;border-radius:3px;box-sizing:border-box;"></div>
<svg style="left:881px;top:827px;" width="14" height="14" viewBox="0 0 14 14"><path d="M1.6 11.6 L12.4 1.6" stroke="#d4d7da" stroke-width="1.2"/><path d="M1 12.4 H8" stroke="#e24a4a" stroke-width="1.4"/></svg>
<span class="t" style="left:900px;top:826px;line-height:16px;font-size:11.5px;color:#f2f2f2;letter-spacing:-0.943px;">STRACK</span>
<div style="left:947px;top:824px;width:98px;height:20px;background:#182741;border:1px solid #3f7fe0;border-radius:3px;box-sizing:border-box;"></div>
<div style="left:1027.5px;top:825px;width:1px;height:18px;background:#3f7fe0;"></div>
<svg style="left:952px;top:827px;" width="14" height="14" viewBox="0 0 14 14"><path d="M2.4 12.6 V6.4 A4.4 4.4 0 0 1 11.2 6.4 V12.6 M5 12.6 V6.6 A1.8 1.8 0 0 1 8.6 6.6 V12.6" fill="none" stroke="#e05a5a" stroke-width="1.2"/><path d="M1.6 12.8 h4 M8 12.8 h4" stroke="#e8e8e8" stroke-width="1.2"/></svg>
<span class="t" style="left:971px;top:826px;line-height:16px;font-size:11.5px;color:#f2f2f2;letter-spacing:-0.648px;">ESNAP 2D</span>
<svg style="left:1032.6px;top:831.2px;" width="7" height="5.6" viewBox="0 0 7 5.6"><path d="M0.3 1 L3.5 4.2 L6.7 1" fill="none" stroke="#c8cacc" stroke-width="1.1"/></svg>
<svg style="left:1050px;top:825px;" width="19" height="18" viewBox="0 0 19 18"><path d="M4.4 15 L3.8 9.6 A5.2 5.2 0 0 1 13.8 6.6 L12.8 10" fill="none" stroke="#3b82f0" stroke-width="4"/><path d="M4.4 15.4 L4.2 13.2" fill="none" stroke="#c8ccd0" stroke-width="4"/><path d="M12.7 10.4 L13.3 8.4" fill="none" stroke="#c8ccd0" stroke-width="4"/></svg>
<span class="t" style="left:1071.7px;top:826px;line-height:16px;font-size:11.5px;color:#f2f2f2;letter-spacing:-0.711px;">ESNAP 3D</span>
<svg style="left:1130.5px;top:831.2px;" width="8" height="6" viewBox="0 0 8 6"><path d="M0.3 1 L4.0 4.6 L7.7 1" fill="none" stroke="#c8cacc" stroke-width="1.1"/></svg>
<div style="left:1147px;top:824px;width:50px;height:20px;background:#182741;border:1px solid #3f7fe0;border-radius:3px;box-sizing:border-box;"></div>
<svg style="left:1152px;top:826px;" width="16" height="15" viewBox="0 0 16 15"><path d="M3.4 0.6 V5.6 M1 3 H6" stroke="#d4d7da" stroke-width="1"/><path d="M3.6 7.6 V13.4 H15" stroke="#d4d7da" stroke-width="1.1" fill="none"/><rect x="6.4" y="9" width="6.4" height="2.4" fill="none" stroke="#d4d7da" stroke-width="1"/></svg>
<span class="t" style="left:1171.2px;top:826px;line-height:16px;font-size:11.5px;color:#f2f2f2;letter-spacing:-0.96px;">DYN</span>
<div style="left:1199px;top:824px;width:76px;height:20px;background:#182741;border:1px solid #3f7fe0;border-radius:3px;box-sizing:border-box;"></div>
<div style="left:1256.5px;top:825px;width:1px;height:18px;background:#3f7fe0;"></div>
<svg style="left:1202px;top:825px;" width="17" height="17" viewBox="0 0 17 17"><path d="M2.6 0.4 V4.6 M0.6 2.4 H4.8" stroke="#d4d7da" stroke-width="1"/><rect x="4.6" y="4.6" width="11.4" height="11" fill="none" stroke="#d4d7da" stroke-width="1.1"/><path d="M4.6 7.4 H16" stroke="#d4d7da" stroke-width="1.1"/><rect x="6.6" y="9.4" width="1.8" height="1.6" fill="#d4d7da"/><rect x="9.8" y="9.4" width="1.8" height="1.6" fill="#d4d7da"/><rect x="13.0" y="9.4" width="1.8" height="1.6" fill="#d4d7da"/><rect x="6.6" y="12.4" width="1.8" height="1.6" fill="#d4d7da"/><rect x="9.8" y="12.4" width="1.8" height="1.6" fill="#d4d7da"/><rect x="13.0" y="12.4" width="1.8" height="1.6" fill="#d4d7da"/></svg>
<span class="t" style="left:1223px;top:826px;line-height:16px;font-size:11.5px;color:#f2f2f2;letter-spacing:-0.934px;">QUAD</span>
<svg style="left:1261px;top:831.2px;" width="8" height="6" viewBox="0 0 8 6"><path d="M0.3 1 L4.0 4.6 L7.7 1" fill="none" stroke="#c8cacc" stroke-width="1.1"/></svg>
<svg style="left:1283px;top:826px;" width="12" height="16" viewBox="0 0 12 16"><path d="M3.4 9.6 a4.6 4.6 0 1 1 5.2 0 v2 h-5.2 z" fill="none" stroke="#8a8d90" stroke-width="1.1"/><path d="M4.4 7 l1.6 1.6 l1.6 -1.6 M6 8.6 v3" fill="none" stroke="#8a8d90" stroke-width="0.8"/><rect x="4" y="12.6" width="4" height="1.8" fill="#8a8d90"/></svg>
<span class="t" style="left:1301.2px;top:826px;line-height:16px;font-size:11.5px;color:#f2f2f2;letter-spacing:-0.796px;">HIDE</span>
<svg style="left:1337px;top:827px;" width="15" height="14" viewBox="0 0 15 14"><rect x="0.6" y="0.6" width="13.4" height="12.4" rx="1" fill="none" stroke="#d4d7da" stroke-width="1.1"/><path d="M0.6 4 H14 M4.6 4 V13" stroke="#d4d7da" stroke-width="1.1"/></svg>
<span class="t" style="left:1354.2px;top:827px;line-height:17px;font-size:12.0px;color:#f2f2f2;letter-spacing:0.072px;">2D Drafting</span>
<svg style="left:1422.6px;top:831.2px;" width="6.6" height="5.4" viewBox="0 0 6.6 5.4"><path d="M0.3 1 L3.3 4.0 L6.3 1" fill="none" stroke="#7a7d80" stroke-width="1.1"/></svg>
<svg style="left:1447px;top:826px;" width="18" height="17" viewBox="0 0 18 17"><path d="M4.6 5.6 v-4.6 h8 v4.6 M4.6 11.4 h-3.4 v-5.8 h15 v5.8 h-3.4" fill="none" stroke="#d4d7da" stroke-width="1.1"/><rect x="4.6" y="9.6" width="8" height="5.4" fill="#181b1d" stroke="#d4d7da" stroke-width="1.1"/><rect x="5.8" y="12" width="5.6" height="2.6" fill="#4a90e8"/></svg>
<span class="t" style="left:1468.3px;top:826px;line-height:16px;font-size:11.5px;color:#f2f2f2;letter-spacing:-0.688px;">PUBLISH</span>
<svg style="left:1522px;top:831.2px;" width="8" height="6" viewBox="0 0 8 6"><path d="M0.3 1 L4.0 4.6 L7.7 1" fill="none" stroke="#c8cacc" stroke-width="1.1"/></svg>
</div></body></html>
